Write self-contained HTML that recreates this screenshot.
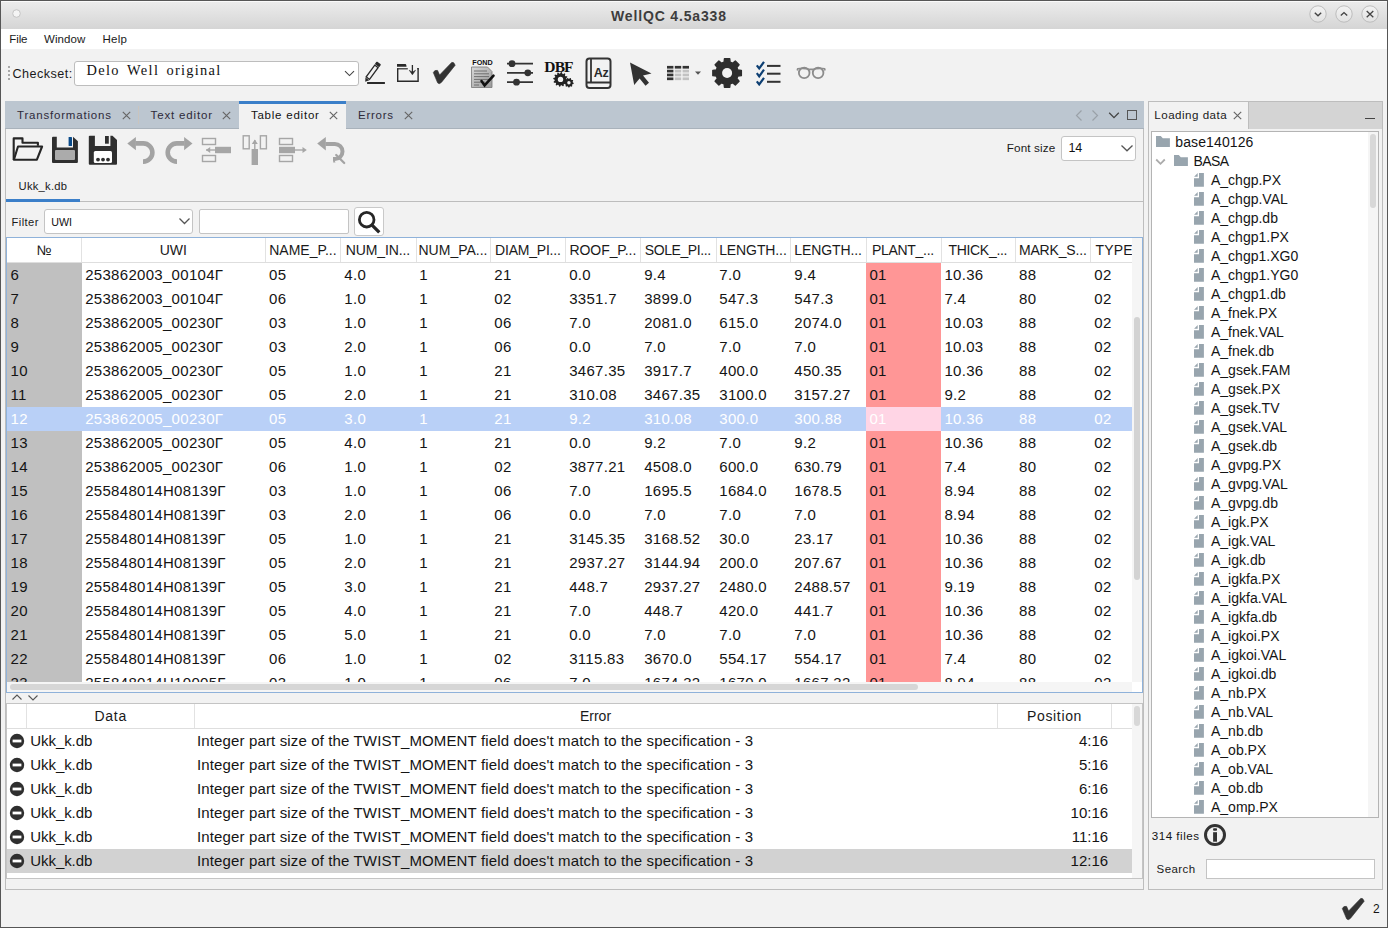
<!DOCTYPE html>
<html><head><meta charset="utf-8"><style>
html,body{margin:0;padding:0;width:1388px;height:928px;overflow:hidden;background:#f2f2f2}
.r{position:absolute;display:block}
.t{position:absolute;white-space:pre;line-height:1}
</style></head><body>
<div class="r" style="left:0px;top:0px;width:1388px;height:928px;background:#565656"></div>
<div class="r" style="left:1px;top:1px;width:1386px;height:926px;background:#f2f2f2"></div>
<div class="r" style="left:1px;top:1px;width:1386px;height:28px;background:linear-gradient(#ececec,#d5d5d5);border-radius:4px 4px 0 0"></div>
<div class="r" style="left:1px;top:1px;width:1386px;height:1px;background:#fafafa;border-radius:4px 4px 0 0"></div>
<div class="t" style="left:611.00px;top:8.65px;font-size:14px;color:#3d3d3d;font-weight:bold;font-family:'Liberation Sans', sans-serif;letter-spacing:0.844px;">WellQC 4.5a338</div>
<svg class="r" style="left:9.5px;top:7.3px;" width="13" height="13" viewBox="0 0 13 13"><circle cx="6.5" cy="6.5" r="3.8" fill="#f4f4f4" stroke="#c4c4c4" stroke-width="1"/></svg>
<svg class="r" style="left:1308.4px;top:4px;" width="20" height="20" viewBox="0 0 20 20"><defs><linearGradient id="gmin" x1="0" y1="0" x2="0" y2="1"><stop offset="0" stop-color="#f3f3f3"/><stop offset="1" stop-color="#e2e2e2"/></linearGradient></defs><circle cx="10" cy="10" r="8.2" fill="url(#gmin)" stroke="#bdbdbd" stroke-width="1"/><path d="M6.8 8.8 L10 11.8 L13.2 8.8" fill="none" stroke="#444" stroke-width="1.4"/></svg>
<svg class="r" style="left:1334.3px;top:4px;" width="20" height="20" viewBox="0 0 20 20"><defs><linearGradient id="gmax" x1="0" y1="0" x2="0" y2="1"><stop offset="0" stop-color="#f3f3f3"/><stop offset="1" stop-color="#e2e2e2"/></linearGradient></defs><circle cx="10" cy="10" r="8.2" fill="url(#gmax)" stroke="#bdbdbd" stroke-width="1"/><path d="M6.8 11.6 L10 8.6 L13.2 11.6" fill="none" stroke="#444" stroke-width="1.4"/></svg>
<svg class="r" style="left:1360.1px;top:4px;" width="20" height="20" viewBox="0 0 20 20"><defs><linearGradient id="gclose" x1="0" y1="0" x2="0" y2="1"><stop offset="0" stop-color="#f3f3f3"/><stop offset="1" stop-color="#e2e2e2"/></linearGradient></defs><circle cx="10" cy="10" r="8.2" fill="url(#gclose)" stroke="#bdbdbd" stroke-width="1"/><path d="M6.7 7 L13.3 13.3 M13.3 7 L6.7 13.3" fill="none" stroke="#444" stroke-width="1.3"/></svg>
<div class="r" style="left:1px;top:29px;width:1386px;height:20px;background:#ffffff"></div>
<div class="t" style="left:9.30px;top:34.07px;font-size:11.5px;color:#1a1a1a;font-weight:normal;font-family:'Liberation Sans', sans-serif;letter-spacing:-0.110px;">File</div>
<div class="t" style="left:44.00px;top:34.07px;font-size:11.5px;color:#1a1a1a;font-weight:normal;font-family:'Liberation Sans', sans-serif;letter-spacing:0.060px;">Window</div>
<div class="t" style="left:102.40px;top:34.07px;font-size:11.5px;color:#1a1a1a;font-weight:normal;font-family:'Liberation Sans', sans-serif;letter-spacing:0.316px;">Help</div>
<div class="r" style="left:8px;top:66px;width:2px;height:2px;background:#a8a8a8"></div>
<div class="r" style="left:8px;top:70px;width:2px;height:2px;background:#a8a8a8"></div>
<div class="r" style="left:8px;top:74px;width:2px;height:2px;background:#a8a8a8"></div>
<div class="r" style="left:8px;top:78px;width:2px;height:2px;background:#a8a8a8"></div>
<div class="t" style="left:12.50px;top:68.03px;font-size:12.6px;color:#1a1a1a;font-weight:normal;font-family:'Liberation Sans', sans-serif;letter-spacing:0.460px;">Checkset:</div>
<div class="r" style="left:74px;top:61px;width:285px;height:25px;background:#fff;border:1px solid #bdbdbd;border-radius:3px;box-sizing:border-box"></div>
<div class="t" style="left:86.50px;top:63.04px;font-size:14.4px;color:#111;font-weight:normal;font-family:'Liberation Serif', serif;letter-spacing:1.303px;">Delo</div>
<div class="t" style="left:127.00px;top:63.04px;font-size:14.4px;color:#111;font-weight:normal;font-family:'Liberation Serif', serif;letter-spacing:1.390px;">Well</div>
<div class="t" style="left:166.50px;top:63.04px;font-size:14.4px;color:#111;font-weight:normal;font-family:'Liberation Serif', serif;letter-spacing:1.273px;">original</div>
<svg class="r" style="left:344px;top:70px;" width="12" height="8" viewBox="0 0 12 8"><path d="M1 1.2 L5.5 5.6 L10 1.2" fill="none" stroke="#444" stroke-width="1.1"/></svg>
<svg class="r" style="left:360px;top:58px;" width="30" height="30" viewBox="0 0 30 30"><g transform="translate(5.2 23.8) rotate(-54)"><path d="M0 0 L3.7 -2.4 L3.7 2.4 Z" fill="#2a2a2a"/><rect x="4.5" y="-2.05" width="14.6" height="4.1" fill="none" stroke="#2a2a2a" stroke-width="1.35"/><rect x="19.9" y="-2.7" width="3.4" height="5.4" rx="0.8" fill="#2a2a2a"/></g><rect x="7.1" y="24" width="17.8" height="2" fill="#2a2a2a"/></svg>
<svg class="r" style="left:396px;top:63px;" width="24" height="21" viewBox="0 0 24 21"><path d="M1 1.1 H9.6 Q10.3 1.1 10.6 3.7 H1 Z" fill="#2a2a2a"/><path d="M1.7 5.4 V18.2 H22.1 V5.4" fill="none" stroke="#2a2a2a" stroke-width="1.4"/><path d="M1 5.8 H11.8" stroke="#2a2a2a" stroke-width="1.2"/><path d="M21.2 5.6 H22.8" stroke="#2a2a2a" stroke-width="1.2"/><path d="M16.4 2 V10" stroke="#2a2a2a" stroke-width="1.3"/><path d="M13.3 7.3 L16.4 11.8 L19.5 7.3 L16.4 9.2 Z" fill="#2a2a2a" stroke="#2a2a2a" stroke-width="0.6" stroke-linejoin="round"/></svg>
<svg class="r" style="left:432px;top:61px;" width="25" height="25" viewBox="0 0 25 25"><path d="M1.3 11.6 Q2.5 8.6 5.6 9.4 L7.6 14 L19.7 1.4 Q21.8 0.4 23.2 4.2 L9.6 21.2 Q7.3 23.8 5.6 21.8 Z" fill="#333" stroke="#333" stroke-width="0.6" stroke-linejoin="round"/></svg>
<svg class="r" style="left:470px;top:58px;" width="26" height="31" viewBox="0 0 26 31"><text x="12.5" y="7.4" text-anchor="middle" font-family="Liberation Sans" font-weight="bold" font-size="7.2" fill="#111">FOND</text><defs><linearGradient id="fd" x1="0" y1="0" x2="1" y2="1"><stop offset="0" stop-color="#d8d8d8"/><stop offset="1" stop-color="#9a9a9a"/></linearGradient></defs><path d="M1.5 9 L17.5 9 L22 13.5 L22 29.5 L1.5 29.5 Z" fill="url(#fd)" stroke="#777" stroke-width="0.8"/><path d="M4 13 H17 M4 15.8 H19 M4 18.6 H19 M4 21.4 H19 M4 24.2 H15 M4 27 H9" stroke="#666" stroke-width="0.9"/><path d="M11.5 23 L14.6 27.4 L23.5 17.6" fill="none" stroke="#111" stroke-width="2.6" stroke-linecap="round"/></svg>
<svg class="r" style="left:506px;top:58px;" width="28" height="30" viewBox="0 0 28 30"><path d="M1 5.7 H27 M1 14.8 H27 M1 24.2 H27" stroke="#333" stroke-width="1.8"/><circle cx="6" cy="5.7" r="3.4" fill="#333"/><circle cx="21.8" cy="14.8" r="3.4" fill="#333"/><circle cx="10.5" cy="24.2" r="3.4" fill="#333"/></svg>
<svg class="r" style="left:542px;top:58px;" width="34" height="31" viewBox="0 0 34 31"><text x="16.5" y="13.9" text-anchor="middle" font-family="Liberation Serif" font-weight="bold" font-size="15.5" fill="#111" letter-spacing="-0.9">DBF</text><polygon points="31.68,25.12 31.54,25.94 30.38,26.32 30.05,26.90 30.29,28.09 29.65,28.63 28.52,28.18 27.89,28.41 27.32,29.48 26.48,29.48 25.91,28.41 25.28,28.18 24.15,28.63 23.51,28.09 23.75,26.90 23.42,26.32 22.26,25.94 22.12,25.12 23.07,24.37 23.19,23.71 22.55,22.67 22.97,21.95 24.18,21.98 24.70,21.55 24.87,20.35 25.66,20.06 26.57,20.87 27.23,20.87 28.14,20.06 28.93,20.35 29.10,21.55 29.62,21.98 30.83,21.95 31.25,22.67 30.61,23.71 30.73,24.37" fill="#222"/><circle cx="26.9" cy="24.7" r="1.7" fill="#f2f2f2"/><polygon points="25.78,21.88 25.66,22.82 24.03,23.28 23.74,23.98 24.57,25.46 23.99,26.21 22.35,25.79 21.74,26.26 21.73,27.95 20.85,28.31 19.64,27.13 18.88,27.23 18.02,28.68 17.08,28.56 16.62,26.93 15.92,26.64 14.44,27.47 13.69,26.89 14.11,25.25 13.64,24.64 11.95,24.63 11.59,23.75 12.77,22.54 12.67,21.78 11.22,20.92 11.34,19.98 12.97,19.52 13.26,18.82 12.43,17.34 13.01,16.59 14.65,17.01 15.26,16.54 15.27,14.85 16.15,14.49 17.36,15.67 18.12,15.57 18.98,14.12 19.92,14.24 20.38,15.87 21.08,16.16 22.56,15.33 23.31,15.91 22.89,17.55 23.36,18.16 25.05,18.17 25.41,19.05 24.23,20.26 24.33,21.02" fill="#222"/><circle cx="18.5" cy="21.4" r="2.7" fill="#f2f2f2"/></svg>
<svg class="r" style="left:585px;top:57px;" width="27" height="32" viewBox="0 0 27 32"><rect x="1.5" y="1.5" width="24" height="29.5" rx="3" fill="none" stroke="#333" stroke-width="2"/><path d="M6 1.5 V25 M1.5 25.5 H25.5" stroke="#333" stroke-width="1.8"/><text x="16" y="19.6" text-anchor="middle" font-family="Liberation Sans" font-weight="bold" font-size="12.5" fill="#2a2a2a" letter-spacing="-0.3">Az</text></svg>
<svg class="r" style="left:628px;top:61px;" width="26" height="26" viewBox="0 0 26 26"><path d="M2 1.5 L23.5 12.5 L15 14.6 L21 21.8 L17.5 24.8 L11.6 17.4 L6.2 24 Z" fill="#333"/></svg>
<svg class="r" style="left:666px;top:65px;" width="25" height="18" viewBox="0 0 25 18"><rect x="1.0" y="0.90" width="6.4" height="2.7" fill="#333"/><rect x="8.8" y="0.90" width="6.4" height="2.7" fill="#333"/><rect x="16.6" y="0.90" width="6.4" height="2.7" fill="#333"/><rect x="1.0" y="4.75" width="6.4" height="2.7" fill="#333"/><rect x="8.8" y="4.75" width="6.4" height="2.7" fill="#c2c2c2"/><rect x="16.6" y="4.75" width="6.4" height="2.7" fill="#c2c2c2"/><rect x="1.0" y="8.60" width="6.4" height="2.7" fill="#333"/><rect x="8.8" y="8.60" width="6.4" height="2.7" fill="#c2c2c2"/><rect x="16.6" y="8.60" width="6.4" height="2.7" fill="#c2c2c2"/><rect x="1.0" y="12.45" width="6.4" height="2.7" fill="#333"/><rect x="8.8" y="12.45" width="6.4" height="2.7" fill="#c2c2c2"/><rect x="16.6" y="12.45" width="6.4" height="2.7" fill="#c2c2c2"/></svg>
<svg class="r" style="left:694px;top:70px;" width="8" height="6" viewBox="0 0 8 6"><path d="M1 1.5 H7 L4 4.8 Z" fill="#555"/></svg>
<svg class="r" style="left:710px;top:57px;" width="34" height="33" viewBox="0 0 34 33"><polygon points="27.89,13.01 31.36,13.35 31.36,18.65 27.89,18.99 26.84,21.52 29.05,24.21 25.31,27.95 22.62,25.74 20.09,26.79 19.75,30.26 14.45,30.26 14.11,26.79 11.58,25.74 8.89,27.95 5.15,24.21 7.36,21.52 6.31,18.99 2.84,18.65 2.84,13.35 6.31,13.01 7.36,10.48 5.15,7.79 8.89,4.05 11.58,6.26 14.11,5.21 14.45,1.74 19.75,1.74 20.09,5.21 22.62,6.26 25.31,4.05 29.05,7.79 26.84,10.48" fill="#2e2e2e" stroke="#2e2e2e" stroke-width="1.4" stroke-linejoin="round"/><circle cx="17.1" cy="16" r="5" fill="#f2f2f2"/></svg>
<svg class="r" style="left:755px;top:58px;" width="27" height="28" viewBox="0 0 27 28"><path d="M1.8 7.400000000000006 L4.2 10.500000000000005 L9 3.9000000000000057" fill="none" stroke="#0d3f73" stroke-width="2.2"/><rect x="12" y="6.900000000000006" width="13.5" height="2" fill="#333"/><path d="M1.8 15.200000000000003 L4.2 18.300000000000004 L9 11.700000000000003" fill="none" stroke="#0d3f73" stroke-width="2.2"/><rect x="12" y="14.700000000000003" width="13.5" height="2" fill="#333"/><path d="M1.8 23.299999999999997 L4.2 26.4 L9 19.799999999999997" fill="none" stroke="#0d3f73" stroke-width="2.2"/><rect x="12" y="22.799999999999997" width="13.5" height="2" fill="#333"/></svg>
<svg class="r" style="left:795px;top:64px;" width="32" height="18" viewBox="0 0 32 18"><circle cx="9.2" cy="8.9" r="5.3" fill="none" stroke="#8c8c8c" stroke-width="1.8"/><circle cx="23.1" cy="8.9" r="5.3" fill="none" stroke="#8c8c8c" stroke-width="1.8"/><path d="M2.3 6.5 L2.6 4.8 Q9 3.8 14.5 5.4 H17.8 Q23.3 3.8 29.7 4.8 L30 6.5" fill="none" stroke="#8c8c8c" stroke-width="1.6" stroke-linejoin="round"/></svg>
<div class="r" style="left:5px;top:101px;width:1139px;height:789px;background:#f2f2f2;border:1px solid #bdbdbd;box-sizing:border-box"></div>
<div class="r" style="left:5px;top:101px;width:1139px;height:28px;background:#bcc6d0;border-bottom:1px solid #a9b2bb;box-sizing:border-box"></div>
<div class="t" style="left:17.00px;top:109.97px;font-size:11.5px;color:#2e2a3a;font-weight:normal;font-family:'Liberation Sans', sans-serif;letter-spacing:0.810px;">Transformations</div>
<svg class="r" style="left:121.5px;top:111px;" width="9" height="9" viewBox="0 0 9 9"><path d="M0.8 0.8 L8.2 8.2 M8.2 0.8 L0.8 8.2" stroke="#666" stroke-width="1.15"/></svg>
<div class="r" style="left:138px;top:106px;width:1px;height:18px;background:#c9c4be"></div>
<div class="t" style="left:150.60px;top:109.97px;font-size:11.5px;color:#2e2a3a;font-weight:normal;font-family:'Liberation Sans', sans-serif;letter-spacing:0.845px;">Text editor</div>
<svg class="r" style="left:221.5px;top:111px;" width="9" height="9" viewBox="0 0 9 9"><path d="M0.8 0.8 L8.2 8.2 M8.2 0.8 L0.8 8.2" stroke="#666" stroke-width="1.15"/></svg>
<div class="r" style="left:239px;top:101px;width:107px;height:28px;background:#f2f2f2"></div>
<div class="r" style="left:239px;top:101px;width:107px;height:3px;background:#3b7fc9"></div>
<div class="t" style="left:250.90px;top:109.97px;font-size:11.5px;color:#111;font-weight:normal;font-family:'Liberation Sans', sans-serif;letter-spacing:0.777px;">Table editor</div>
<svg class="r" style="left:328.5px;top:111px;" width="9" height="9" viewBox="0 0 9 9"><path d="M0.8 0.8 L8.2 8.2 M8.2 0.8 L0.8 8.2" stroke="#666" stroke-width="1.15"/></svg>
<div class="t" style="left:358.00px;top:109.97px;font-size:11.5px;color:#2e2a3a;font-weight:normal;font-family:'Liberation Sans', sans-serif;letter-spacing:0.739px;">Errors</div>
<svg class="r" style="left:403.5px;top:111px;" width="9" height="9" viewBox="0 0 9 9"><path d="M0.8 0.8 L8.2 8.2 M8.2 0.8 L0.8 8.2" stroke="#666" stroke-width="1.15"/></svg>
<svg class="r" style="left:1074px;top:109px;" width="10" height="13" viewBox="0 0 10 13"><path d="M7.5 1.5 L2.5 6.5 L7.5 11.5" fill="none" stroke="#9aa1a8" stroke-width="1.2"/></svg>
<svg class="r" style="left:1090px;top:109px;" width="10" height="13" viewBox="0 0 10 13"><path d="M2.5 1.5 L7.5 6.5 L2.5 11.5" fill="none" stroke="#9aa1a8" stroke-width="1.2"/></svg>
<svg class="r" style="left:1108px;top:111px;" width="12" height="9" viewBox="0 0 12 9"><path d="M1.2 1.8 L6 6.6 L10.8 1.8" fill="none" stroke="#444" stroke-width="1.3"/></svg>
<div class="r" style="left:1127px;top:110px;width:10px;height:10px;border:1.5px solid #555;box-sizing:border-box"></div>
<svg class="r" style="left:11px;top:136px;" width="33" height="27" viewBox="0 0 33 27"><path d="M2.7 24 V2.4 H11.5 V6.7 H26.9 V9.8" fill="none" stroke="#252525" stroke-width="2.1" stroke-linejoin="round"/><path d="M7 10.5 H31.1 L25.9 23.7 H2.9 Z" fill="none" stroke="#252525" stroke-width="2.1" stroke-linejoin="round"/></svg>
<svg class="r" style="left:51px;top:136px;" width="28" height="28" viewBox="0 0 28 28"><path d="M1 1.8 Q1 0.8 2 0.8 L22 0.8 L26.9 5.2 L26.9 25.9 Q26.9 26.9 25.9 26.9 L2 26.9 Q1 26.9 1 25.9 Z" fill="#2f2f2f"/><rect x="5.8" y="0" width="16.2" height="11.5" fill="#f2f2f2"/><rect x="17.6" y="1" width="3.4" height="9" fill="#0a4b8a" rx="0.6"/><rect x="4" y="14" width="20" height="10" rx="1" fill="#ababab"/></svg>
<svg class="r" style="left:88px;top:135px;" width="30" height="31" viewBox="0 0 30 31"><path d="M0.8 1.7 Q0.8 0.7 1.8 0.7 L24.5 0.7 L29 5 L29 28.8 Q29 29.8 28 29.8 L1.8 29.8 Q0.8 29.8 0.8 28.8 Z" fill="#2f2f2f"/><rect x="6.9" y="0" width="15.5" height="11" fill="#f2f2f2"/><rect x="17" y="1" width="3.8" height="7.7" fill="#2f2f2f"/><rect x="5.8" y="15.9" width="18.2" height="12" rx="1.5" fill="#fff"/><circle cx="10" cy="24.6" r="1.9" fill="#2f2f2f"/><circle cx="15" cy="24.6" r="1.9" fill="#2f2f2f"/><circle cx="20" cy="24.6" r="1.9" fill="#2f2f2f"/></svg>
<svg class="r" style="left:126px;top:136px;" width="31" height="28" viewBox="0 0 31 28"><path d="M9.5 7.4 H17.3 A9.1 9.1 0 0 1 17.3 25.6 H17" fill="none" stroke="#a3a3a3" stroke-width="4.6"/><path d="M1.3 7.5 L9.9 1 L9.9 14.3 Z" fill="#a3a3a3"/></svg>
<svg class="r" style="left:163px;top:136px;" width="31" height="28" viewBox="0 0 31 28"><path d="M21.5 7.4 H13.8 A9.1 9.1 0 0 0 13.8 25.6 H14" fill="none" stroke="#a3a3a3" stroke-width="4.6"/><path d="M29.5 7.5 L21.1 1 L21.1 14.3 Z" fill="#a3a3a3"/></svg>
<svg class="r" style="left:201px;top:137px;" width="32" height="26" viewBox="0 0 32 26"><rect x="1.5" y="1.5" width="13" height="6" fill="none" stroke="#a6a6a6" stroke-width="1.4"/><rect x="1.5" y="18.5" width="13" height="6" fill="none" stroke="#a6a6a6" stroke-width="1.4"/><rect x="14" y="9.8" width="16" height="6.4" fill="#a6a6a6"/><path d="M5 13 H14" stroke="#a6a6a6" stroke-width="1.4"/><path d="M9.2 10 L5 13 L9.2 16 Z" fill="#a6a6a6"/></svg>
<svg class="r" style="left:242px;top:134px;" width="27" height="32" viewBox="0 0 27 32"><rect x="1.2" y="1.8" width="6" height="13" fill="none" stroke="#a6a6a6" stroke-width="1.4"/><rect x="18.4" y="1.8" width="6" height="13" fill="none" stroke="#a6a6a6" stroke-width="1.4"/><rect x="9.6" y="15" width="6.4" height="16" fill="#a6a6a6"/><path d="M12.8 6 V15" stroke="#a6a6a6" stroke-width="1.4"/><path d="M9.8 10 L12.8 5.4 L15.8 10 Z" fill="#a6a6a6"/></svg>
<svg class="r" style="left:278px;top:137px;" width="31" height="26" viewBox="0 0 31 26"><rect x="1.5" y="1.5" width="13" height="6" fill="none" stroke="#a6a6a6" stroke-width="1.4"/><rect x="1.5" y="18.5" width="13" height="6" fill="none" stroke="#a6a6a6" stroke-width="1.4"/><rect x="1" y="9.8" width="16" height="6.4" fill="#a6a6a6"/><path d="M17 13 H25" stroke="#a6a6a6" stroke-width="1.4"/><path d="M24.5 10 L28.8 13 L24.5 16 Z" fill="#a6a6a6"/></svg>
<svg class="r" style="left:316px;top:136px;" width="31" height="29" viewBox="0 0 31 29"><path d="M9.5 7.9 H18.9 A7.6 7.6 0 0 1 18.9 23.1 H17" fill="none" stroke="#a3a3a3" stroke-width="4"/><path d="M17.2 21.5 V26.6 L19.5 26.6 Z" fill="#a3a3a3"/><path d="M1.2 7.6 L9.8 1 L9.8 14.4 Z" fill="#a3a3a3"/><path d="M20.2 19 L28.2 27" stroke="#a3a3a3" stroke-width="2.2" stroke-linecap="round"/></svg>
<div class="t" style="left:1006.80px;top:142.40px;font-size:11.7px;color:#1a1a1a;font-weight:normal;font-family:'Liberation Sans', sans-serif;letter-spacing:0.129px;">Font size</div>
<div class="r" style="left:1061px;top:136px;width:75px;height:25px;background:#fff;border:1px solid #c4c4c4;border-radius:3px;box-sizing:border-box"></div>
<div class="t" style="left:1068.40px;top:141.92px;font-size:12.5px;color:#111;font-weight:normal;font-family:'Liberation Sans', sans-serif;letter-spacing:0.000px;">14</div>
<svg class="r" style="left:1120px;top:144px;" width="14" height="9" viewBox="0 0 14 9"><path d="M1.5 1.5 L7 6.8 L12.5 1.5" fill="none" stroke="#555" stroke-width="1.3"/></svg>
<div class="t" style="left:18.60px;top:181.32px;font-size:11.2px;color:#1a1a1a;font-weight:normal;font-family:'Liberation Sans', sans-serif;letter-spacing:0.245px;">Ukk_k.db</div>
<div class="r" style="left:6px;top:201px;width:1137px;height:1px;background:#bdbdbd"></div>
<div class="r" style="left:6px;top:199px;width:74px;height:3px;background:#3b7fc9"></div>
<div class="t" style="left:11.50px;top:216.82px;font-size:11.2px;color:#1a1a1a;font-weight:normal;font-family:'Liberation Sans', sans-serif;letter-spacing:0.422px;">Filter</div>
<div class="r" style="left:44px;top:209px;width:149px;height:25px;background:#fff;border:1px solid #c4c4c4;border-radius:3px;box-sizing:border-box"></div>
<div class="t" style="left:51.30px;top:216.94px;font-size:10.7px;color:#111;font-weight:normal;font-family:'Liberation Sans', sans-serif;letter-spacing:0.000px;">UWI</div>
<svg class="r" style="left:178px;top:217px;" width="13" height="9" viewBox="0 0 13 9"><path d="M1.5 1.5 L6.5 6.5 L11.5 1.5" fill="none" stroke="#555" stroke-width="1.3"/></svg>
<div class="r" style="left:199px;top:209px;width:150px;height:25px;background:#fff;border:1px solid #c4c4c4;border-radius:2px;box-sizing:border-box"></div>
<div class="r" style="left:354px;top:207px;width:30px;height:29px;background:#fff;border:1px solid #c9c9c9;border-radius:3px;box-sizing:border-box"></div>
<svg class="r" style="left:356px;top:209px;" width="26" height="25" viewBox="0 0 26 25"><circle cx="10.7" cy="10.7" r="7.3" fill="none" stroke="#262626" stroke-width="2.8"/><path d="M15.8 15.8 L23.3 23.3" stroke="#262626" stroke-width="3.3"/></svg>
<div class="r" style="left:6px;top:237px;width:1137px;height:456px;background:#fff;border:1px solid #8fb2da;box-sizing:border-box"></div>
<div class="r" style="left:7px;top:262px;width:1125px;height:1px;background:#dedede"></div>
<div class="r" style="left:81px;top:238px;width:1px;height:24px;background:#e2e2e2"></div>
<div class="r" style="left:265px;top:238px;width:1px;height:24px;background:#e2e2e2"></div>
<div class="r" style="left:340px;top:238px;width:1px;height:24px;background:#e2e2e2"></div>
<div class="r" style="left:416px;top:238px;width:1px;height:24px;background:#e2e2e2"></div>
<div class="r" style="left:490px;top:238px;width:1px;height:24px;background:#e2e2e2"></div>
<div class="r" style="left:565px;top:238px;width:1px;height:24px;background:#e2e2e2"></div>
<div class="r" style="left:640px;top:238px;width:1px;height:24px;background:#e2e2e2"></div>
<div class="r" style="left:716px;top:238px;width:1px;height:24px;background:#e2e2e2"></div>
<div class="r" style="left:790px;top:238px;width:1px;height:24px;background:#e2e2e2"></div>
<div class="r" style="left:866px;top:238px;width:1px;height:24px;background:#e2e2e2"></div>
<div class="r" style="left:941px;top:238px;width:1px;height:24px;background:#e2e2e2"></div>
<div class="r" style="left:1015px;top:238px;width:1px;height:24px;background:#e2e2e2"></div>
<div class="r" style="left:1090px;top:238px;width:1px;height:24px;background:#e2e2e2"></div>
<div class="r" style="left:7px;top:238px;width:1125px;height:444px;overflow:hidden">
<div class="t" style="left:29.69px;top:5.45px;font-size:14px;color:#1a1a1a;font-weight:normal;font-family:'Liberation Sans', sans-serif;letter-spacing:0.000px;">№</div>
<div class="t" style="left:152.74px;top:5.45px;font-size:14px;color:#1a1a1a;font-weight:normal;font-family:'Liberation Sans', sans-serif;letter-spacing:0.000px;">UWI</div>
<div class="t" style="left:262.25px;top:5.45px;font-size:14px;color:#1a1a1a;font-weight:normal;font-family:'Liberation Sans', sans-serif;letter-spacing:-0.017px;">NAME_P...</div>
<div class="t" style="left:338.85px;top:5.45px;font-size:14px;color:#1a1a1a;font-weight:normal;font-family:'Liberation Sans', sans-serif;letter-spacing:-0.130px;">NUM_IN...</div>
<div class="t" style="left:411.50px;top:5.45px;font-size:14px;color:#1a1a1a;font-weight:normal;font-family:'Liberation Sans', sans-serif;letter-spacing:0.003px;">NUM_PA...</div>
<div class="t" style="left:488.10px;top:5.45px;font-size:14px;color:#1a1a1a;font-weight:normal;font-family:'Liberation Sans', sans-serif;letter-spacing:-0.220px;">DIAM_PI...</div>
<div class="t" style="left:562.50px;top:5.45px;font-size:14px;color:#1a1a1a;font-weight:normal;font-family:'Liberation Sans', sans-serif;letter-spacing:-0.079px;">ROOF_P...</div>
<div class="t" style="left:637.85px;top:5.45px;font-size:14px;color:#1a1a1a;font-weight:normal;font-family:'Liberation Sans', sans-serif;letter-spacing:-0.426px;">SOLE_PI...</div>
<div class="t" style="left:712.20px;top:5.45px;font-size:14px;color:#1a1a1a;font-weight:normal;font-family:'Liberation Sans', sans-serif;letter-spacing:-0.107px;">LENGTH...</div>
<div class="t" style="left:787.25px;top:5.45px;font-size:14px;color:#1a1a1a;font-weight:normal;font-family:'Liberation Sans', sans-serif;letter-spacing:-0.107px;">LENGTH...</div>
<div class="t" style="left:865.10px;top:5.45px;font-size:14px;color:#1a1a1a;font-weight:normal;font-family:'Liberation Sans', sans-serif;letter-spacing:-0.323px;">PLANT_...</div>
<div class="t" style="left:941.45px;top:5.45px;font-size:14px;color:#1a1a1a;font-weight:normal;font-family:'Liberation Sans', sans-serif;letter-spacing:-0.307px;">THICK_...</div>
<div class="t" style="left:1011.90px;top:5.45px;font-size:14px;color:#1a1a1a;font-weight:normal;font-family:'Liberation Sans', sans-serif;letter-spacing:-0.155px;">MARK_S...</div>
<div class="t" style="left:1088.50px;top:5.45px;font-size:14px;color:#1a1a1a;font-weight:normal;font-family:'Liberation Sans', sans-serif;letter-spacing:0.144px;">TYPE</div>
<div class="r" style="left:0px;top:25px;width:75px;height:24px;background:#c0c0c0"></div>
<div class="r" style="left:859px;top:25px;width:75px;height:24px;background:#ff9696"></div>
<div class="t" style="left:3.50px;top:29.30px;font-size:15px;color:#141414;font-weight:normal;font-family:'Liberation Sans', sans-serif;letter-spacing:0.000px;letter-spacing:0.3px">6</div>
<div class="t" style="left:78.20px;top:29.30px;font-size:15px;color:#141414;font-weight:normal;font-family:'Liberation Sans', sans-serif;letter-spacing:0.000px;letter-spacing:0.3px">253862003_00104Г</div>
<div class="t" style="left:262.10px;top:29.30px;font-size:15px;color:#141414;font-weight:normal;font-family:'Liberation Sans', sans-serif;letter-spacing:0.000px;letter-spacing:0.3px">05</div>
<div class="t" style="left:337.30px;top:29.30px;font-size:15px;color:#141414;font-weight:normal;font-family:'Liberation Sans', sans-serif;letter-spacing:0.000px;letter-spacing:0.3px">4.0</div>
<div class="t" style="left:412.30px;top:29.30px;font-size:15px;color:#141414;font-weight:normal;font-family:'Liberation Sans', sans-serif;letter-spacing:0.000px;letter-spacing:0.3px">1</div>
<div class="t" style="left:487.30px;top:29.30px;font-size:15px;color:#141414;font-weight:normal;font-family:'Liberation Sans', sans-serif;letter-spacing:0.000px;letter-spacing:0.3px">21</div>
<div class="t" style="left:562.20px;top:29.30px;font-size:15px;color:#141414;font-weight:normal;font-family:'Liberation Sans', sans-serif;letter-spacing:0.000px;letter-spacing:0.3px">0.0</div>
<div class="t" style="left:637.20px;top:29.30px;font-size:15px;color:#141414;font-weight:normal;font-family:'Liberation Sans', sans-serif;letter-spacing:0.000px;letter-spacing:0.3px">9.4</div>
<div class="t" style="left:712.30px;top:29.30px;font-size:15px;color:#141414;font-weight:normal;font-family:'Liberation Sans', sans-serif;letter-spacing:0.000px;letter-spacing:0.3px">7.0</div>
<div class="t" style="left:787.30px;top:29.30px;font-size:15px;color:#141414;font-weight:normal;font-family:'Liberation Sans', sans-serif;letter-spacing:0.000px;letter-spacing:0.3px">9.4</div>
<div class="t" style="left:862.40px;top:29.30px;font-size:15px;color:#141414;font-weight:normal;font-family:'Liberation Sans', sans-serif;letter-spacing:0.000px;letter-spacing:0.3px">01</div>
<div class="t" style="left:937.40px;top:29.30px;font-size:15px;color:#141414;font-weight:normal;font-family:'Liberation Sans', sans-serif;letter-spacing:0.000px;letter-spacing:0.3px">10.36</div>
<div class="t" style="left:1012.10px;top:29.30px;font-size:15px;color:#141414;font-weight:normal;font-family:'Liberation Sans', sans-serif;letter-spacing:0.000px;letter-spacing:0.3px">88</div>
<div class="t" style="left:1087.30px;top:29.30px;font-size:15px;color:#141414;font-weight:normal;font-family:'Liberation Sans', sans-serif;letter-spacing:0.000px;letter-spacing:0.3px">02</div>
<div class="r" style="left:0px;top:49px;width:75px;height:24px;background:#c0c0c0"></div>
<div class="r" style="left:859px;top:49px;width:75px;height:24px;background:#ff9696"></div>
<div class="t" style="left:3.50px;top:53.30px;font-size:15px;color:#141414;font-weight:normal;font-family:'Liberation Sans', sans-serif;letter-spacing:0.000px;letter-spacing:0.3px">7</div>
<div class="t" style="left:78.20px;top:53.30px;font-size:15px;color:#141414;font-weight:normal;font-family:'Liberation Sans', sans-serif;letter-spacing:0.000px;letter-spacing:0.3px">253862003_00104Г</div>
<div class="t" style="left:262.10px;top:53.30px;font-size:15px;color:#141414;font-weight:normal;font-family:'Liberation Sans', sans-serif;letter-spacing:0.000px;letter-spacing:0.3px">06</div>
<div class="t" style="left:337.30px;top:53.30px;font-size:15px;color:#141414;font-weight:normal;font-family:'Liberation Sans', sans-serif;letter-spacing:0.000px;letter-spacing:0.3px">1.0</div>
<div class="t" style="left:412.30px;top:53.30px;font-size:15px;color:#141414;font-weight:normal;font-family:'Liberation Sans', sans-serif;letter-spacing:0.000px;letter-spacing:0.3px">1</div>
<div class="t" style="left:487.30px;top:53.30px;font-size:15px;color:#141414;font-weight:normal;font-family:'Liberation Sans', sans-serif;letter-spacing:0.000px;letter-spacing:0.3px">02</div>
<div class="t" style="left:562.20px;top:53.30px;font-size:15px;color:#141414;font-weight:normal;font-family:'Liberation Sans', sans-serif;letter-spacing:0.000px;letter-spacing:0.3px">3351.7</div>
<div class="t" style="left:637.20px;top:53.30px;font-size:15px;color:#141414;font-weight:normal;font-family:'Liberation Sans', sans-serif;letter-spacing:0.000px;letter-spacing:0.3px">3899.0</div>
<div class="t" style="left:712.30px;top:53.30px;font-size:15px;color:#141414;font-weight:normal;font-family:'Liberation Sans', sans-serif;letter-spacing:0.000px;letter-spacing:0.3px">547.3</div>
<div class="t" style="left:787.30px;top:53.30px;font-size:15px;color:#141414;font-weight:normal;font-family:'Liberation Sans', sans-serif;letter-spacing:0.000px;letter-spacing:0.3px">547.3</div>
<div class="t" style="left:862.40px;top:53.30px;font-size:15px;color:#141414;font-weight:normal;font-family:'Liberation Sans', sans-serif;letter-spacing:0.000px;letter-spacing:0.3px">01</div>
<div class="t" style="left:937.40px;top:53.30px;font-size:15px;color:#141414;font-weight:normal;font-family:'Liberation Sans', sans-serif;letter-spacing:0.000px;letter-spacing:0.3px">7.4</div>
<div class="t" style="left:1012.10px;top:53.30px;font-size:15px;color:#141414;font-weight:normal;font-family:'Liberation Sans', sans-serif;letter-spacing:0.000px;letter-spacing:0.3px">80</div>
<div class="t" style="left:1087.30px;top:53.30px;font-size:15px;color:#141414;font-weight:normal;font-family:'Liberation Sans', sans-serif;letter-spacing:0.000px;letter-spacing:0.3px">02</div>
<div class="r" style="left:0px;top:73px;width:75px;height:24px;background:#c0c0c0"></div>
<div class="r" style="left:859px;top:73px;width:75px;height:24px;background:#ff9696"></div>
<div class="t" style="left:3.50px;top:77.30px;font-size:15px;color:#141414;font-weight:normal;font-family:'Liberation Sans', sans-serif;letter-spacing:0.000px;letter-spacing:0.3px">8</div>
<div class="t" style="left:78.20px;top:77.30px;font-size:15px;color:#141414;font-weight:normal;font-family:'Liberation Sans', sans-serif;letter-spacing:0.000px;letter-spacing:0.3px">253862005_00230Г</div>
<div class="t" style="left:262.10px;top:77.30px;font-size:15px;color:#141414;font-weight:normal;font-family:'Liberation Sans', sans-serif;letter-spacing:0.000px;letter-spacing:0.3px">03</div>
<div class="t" style="left:337.30px;top:77.30px;font-size:15px;color:#141414;font-weight:normal;font-family:'Liberation Sans', sans-serif;letter-spacing:0.000px;letter-spacing:0.3px">1.0</div>
<div class="t" style="left:412.30px;top:77.30px;font-size:15px;color:#141414;font-weight:normal;font-family:'Liberation Sans', sans-serif;letter-spacing:0.000px;letter-spacing:0.3px">1</div>
<div class="t" style="left:487.30px;top:77.30px;font-size:15px;color:#141414;font-weight:normal;font-family:'Liberation Sans', sans-serif;letter-spacing:0.000px;letter-spacing:0.3px">06</div>
<div class="t" style="left:562.20px;top:77.30px;font-size:15px;color:#141414;font-weight:normal;font-family:'Liberation Sans', sans-serif;letter-spacing:0.000px;letter-spacing:0.3px">7.0</div>
<div class="t" style="left:637.20px;top:77.30px;font-size:15px;color:#141414;font-weight:normal;font-family:'Liberation Sans', sans-serif;letter-spacing:0.000px;letter-spacing:0.3px">2081.0</div>
<div class="t" style="left:712.30px;top:77.30px;font-size:15px;color:#141414;font-weight:normal;font-family:'Liberation Sans', sans-serif;letter-spacing:0.000px;letter-spacing:0.3px">615.0</div>
<div class="t" style="left:787.30px;top:77.30px;font-size:15px;color:#141414;font-weight:normal;font-family:'Liberation Sans', sans-serif;letter-spacing:0.000px;letter-spacing:0.3px">2074.0</div>
<div class="t" style="left:862.40px;top:77.30px;font-size:15px;color:#141414;font-weight:normal;font-family:'Liberation Sans', sans-serif;letter-spacing:0.000px;letter-spacing:0.3px">01</div>
<div class="t" style="left:937.40px;top:77.30px;font-size:15px;color:#141414;font-weight:normal;font-family:'Liberation Sans', sans-serif;letter-spacing:0.000px;letter-spacing:0.3px">10.03</div>
<div class="t" style="left:1012.10px;top:77.30px;font-size:15px;color:#141414;font-weight:normal;font-family:'Liberation Sans', sans-serif;letter-spacing:0.000px;letter-spacing:0.3px">88</div>
<div class="t" style="left:1087.30px;top:77.30px;font-size:15px;color:#141414;font-weight:normal;font-family:'Liberation Sans', sans-serif;letter-spacing:0.000px;letter-spacing:0.3px">02</div>
<div class="r" style="left:0px;top:97px;width:75px;height:24px;background:#c0c0c0"></div>
<div class="r" style="left:859px;top:97px;width:75px;height:24px;background:#ff9696"></div>
<div class="t" style="left:3.50px;top:101.30px;font-size:15px;color:#141414;font-weight:normal;font-family:'Liberation Sans', sans-serif;letter-spacing:0.000px;letter-spacing:0.3px">9</div>
<div class="t" style="left:78.20px;top:101.30px;font-size:15px;color:#141414;font-weight:normal;font-family:'Liberation Sans', sans-serif;letter-spacing:0.000px;letter-spacing:0.3px">253862005_00230Г</div>
<div class="t" style="left:262.10px;top:101.30px;font-size:15px;color:#141414;font-weight:normal;font-family:'Liberation Sans', sans-serif;letter-spacing:0.000px;letter-spacing:0.3px">03</div>
<div class="t" style="left:337.30px;top:101.30px;font-size:15px;color:#141414;font-weight:normal;font-family:'Liberation Sans', sans-serif;letter-spacing:0.000px;letter-spacing:0.3px">2.0</div>
<div class="t" style="left:412.30px;top:101.30px;font-size:15px;color:#141414;font-weight:normal;font-family:'Liberation Sans', sans-serif;letter-spacing:0.000px;letter-spacing:0.3px">1</div>
<div class="t" style="left:487.30px;top:101.30px;font-size:15px;color:#141414;font-weight:normal;font-family:'Liberation Sans', sans-serif;letter-spacing:0.000px;letter-spacing:0.3px">06</div>
<div class="t" style="left:562.20px;top:101.30px;font-size:15px;color:#141414;font-weight:normal;font-family:'Liberation Sans', sans-serif;letter-spacing:0.000px;letter-spacing:0.3px">0.0</div>
<div class="t" style="left:637.20px;top:101.30px;font-size:15px;color:#141414;font-weight:normal;font-family:'Liberation Sans', sans-serif;letter-spacing:0.000px;letter-spacing:0.3px">7.0</div>
<div class="t" style="left:712.30px;top:101.30px;font-size:15px;color:#141414;font-weight:normal;font-family:'Liberation Sans', sans-serif;letter-spacing:0.000px;letter-spacing:0.3px">7.0</div>
<div class="t" style="left:787.30px;top:101.30px;font-size:15px;color:#141414;font-weight:normal;font-family:'Liberation Sans', sans-serif;letter-spacing:0.000px;letter-spacing:0.3px">7.0</div>
<div class="t" style="left:862.40px;top:101.30px;font-size:15px;color:#141414;font-weight:normal;font-family:'Liberation Sans', sans-serif;letter-spacing:0.000px;letter-spacing:0.3px">01</div>
<div class="t" style="left:937.40px;top:101.30px;font-size:15px;color:#141414;font-weight:normal;font-family:'Liberation Sans', sans-serif;letter-spacing:0.000px;letter-spacing:0.3px">10.03</div>
<div class="t" style="left:1012.10px;top:101.30px;font-size:15px;color:#141414;font-weight:normal;font-family:'Liberation Sans', sans-serif;letter-spacing:0.000px;letter-spacing:0.3px">88</div>
<div class="t" style="left:1087.30px;top:101.30px;font-size:15px;color:#141414;font-weight:normal;font-family:'Liberation Sans', sans-serif;letter-spacing:0.000px;letter-spacing:0.3px">02</div>
<div class="r" style="left:0px;top:121px;width:75px;height:24px;background:#c0c0c0"></div>
<div class="r" style="left:859px;top:121px;width:75px;height:24px;background:#ff9696"></div>
<div class="t" style="left:3.50px;top:125.30px;font-size:15px;color:#141414;font-weight:normal;font-family:'Liberation Sans', sans-serif;letter-spacing:0.000px;letter-spacing:0.3px">10</div>
<div class="t" style="left:78.20px;top:125.30px;font-size:15px;color:#141414;font-weight:normal;font-family:'Liberation Sans', sans-serif;letter-spacing:0.000px;letter-spacing:0.3px">253862005_00230Г</div>
<div class="t" style="left:262.10px;top:125.30px;font-size:15px;color:#141414;font-weight:normal;font-family:'Liberation Sans', sans-serif;letter-spacing:0.000px;letter-spacing:0.3px">05</div>
<div class="t" style="left:337.30px;top:125.30px;font-size:15px;color:#141414;font-weight:normal;font-family:'Liberation Sans', sans-serif;letter-spacing:0.000px;letter-spacing:0.3px">1.0</div>
<div class="t" style="left:412.30px;top:125.30px;font-size:15px;color:#141414;font-weight:normal;font-family:'Liberation Sans', sans-serif;letter-spacing:0.000px;letter-spacing:0.3px">1</div>
<div class="t" style="left:487.30px;top:125.30px;font-size:15px;color:#141414;font-weight:normal;font-family:'Liberation Sans', sans-serif;letter-spacing:0.000px;letter-spacing:0.3px">21</div>
<div class="t" style="left:562.20px;top:125.30px;font-size:15px;color:#141414;font-weight:normal;font-family:'Liberation Sans', sans-serif;letter-spacing:0.000px;letter-spacing:0.3px">3467.35</div>
<div class="t" style="left:637.20px;top:125.30px;font-size:15px;color:#141414;font-weight:normal;font-family:'Liberation Sans', sans-serif;letter-spacing:0.000px;letter-spacing:0.3px">3917.7</div>
<div class="t" style="left:712.30px;top:125.30px;font-size:15px;color:#141414;font-weight:normal;font-family:'Liberation Sans', sans-serif;letter-spacing:0.000px;letter-spacing:0.3px">400.0</div>
<div class="t" style="left:787.30px;top:125.30px;font-size:15px;color:#141414;font-weight:normal;font-family:'Liberation Sans', sans-serif;letter-spacing:0.000px;letter-spacing:0.3px">450.35</div>
<div class="t" style="left:862.40px;top:125.30px;font-size:15px;color:#141414;font-weight:normal;font-family:'Liberation Sans', sans-serif;letter-spacing:0.000px;letter-spacing:0.3px">01</div>
<div class="t" style="left:937.40px;top:125.30px;font-size:15px;color:#141414;font-weight:normal;font-family:'Liberation Sans', sans-serif;letter-spacing:0.000px;letter-spacing:0.3px">10.36</div>
<div class="t" style="left:1012.10px;top:125.30px;font-size:15px;color:#141414;font-weight:normal;font-family:'Liberation Sans', sans-serif;letter-spacing:0.000px;letter-spacing:0.3px">88</div>
<div class="t" style="left:1087.30px;top:125.30px;font-size:15px;color:#141414;font-weight:normal;font-family:'Liberation Sans', sans-serif;letter-spacing:0.000px;letter-spacing:0.3px">02</div>
<div class="r" style="left:0px;top:145px;width:75px;height:24px;background:#c0c0c0"></div>
<div class="r" style="left:859px;top:145px;width:75px;height:24px;background:#ff9696"></div>
<div class="t" style="left:3.50px;top:149.30px;font-size:15px;color:#141414;font-weight:normal;font-family:'Liberation Sans', sans-serif;letter-spacing:0.000px;letter-spacing:0.3px">11</div>
<div class="t" style="left:78.20px;top:149.30px;font-size:15px;color:#141414;font-weight:normal;font-family:'Liberation Sans', sans-serif;letter-spacing:0.000px;letter-spacing:0.3px">253862005_00230Г</div>
<div class="t" style="left:262.10px;top:149.30px;font-size:15px;color:#141414;font-weight:normal;font-family:'Liberation Sans', sans-serif;letter-spacing:0.000px;letter-spacing:0.3px">05</div>
<div class="t" style="left:337.30px;top:149.30px;font-size:15px;color:#141414;font-weight:normal;font-family:'Liberation Sans', sans-serif;letter-spacing:0.000px;letter-spacing:0.3px">2.0</div>
<div class="t" style="left:412.30px;top:149.30px;font-size:15px;color:#141414;font-weight:normal;font-family:'Liberation Sans', sans-serif;letter-spacing:0.000px;letter-spacing:0.3px">1</div>
<div class="t" style="left:487.30px;top:149.30px;font-size:15px;color:#141414;font-weight:normal;font-family:'Liberation Sans', sans-serif;letter-spacing:0.000px;letter-spacing:0.3px">21</div>
<div class="t" style="left:562.20px;top:149.30px;font-size:15px;color:#141414;font-weight:normal;font-family:'Liberation Sans', sans-serif;letter-spacing:0.000px;letter-spacing:0.3px">310.08</div>
<div class="t" style="left:637.20px;top:149.30px;font-size:15px;color:#141414;font-weight:normal;font-family:'Liberation Sans', sans-serif;letter-spacing:0.000px;letter-spacing:0.3px">3467.35</div>
<div class="t" style="left:712.30px;top:149.30px;font-size:15px;color:#141414;font-weight:normal;font-family:'Liberation Sans', sans-serif;letter-spacing:0.000px;letter-spacing:0.3px">3100.0</div>
<div class="t" style="left:787.30px;top:149.30px;font-size:15px;color:#141414;font-weight:normal;font-family:'Liberation Sans', sans-serif;letter-spacing:0.000px;letter-spacing:0.3px">3157.27</div>
<div class="t" style="left:862.40px;top:149.30px;font-size:15px;color:#141414;font-weight:normal;font-family:'Liberation Sans', sans-serif;letter-spacing:0.000px;letter-spacing:0.3px">01</div>
<div class="t" style="left:937.40px;top:149.30px;font-size:15px;color:#141414;font-weight:normal;font-family:'Liberation Sans', sans-serif;letter-spacing:0.000px;letter-spacing:0.3px">9.2</div>
<div class="t" style="left:1012.10px;top:149.30px;font-size:15px;color:#141414;font-weight:normal;font-family:'Liberation Sans', sans-serif;letter-spacing:0.000px;letter-spacing:0.3px">88</div>
<div class="t" style="left:1087.30px;top:149.30px;font-size:15px;color:#141414;font-weight:normal;font-family:'Liberation Sans', sans-serif;letter-spacing:0.000px;letter-spacing:0.3px">02</div>
<div class="r" style="left:0px;top:169px;width:1125px;height:24px;background:#b9d0f7"></div>
<div class="r" style="left:859px;top:169px;width:75px;height:24px;background:#ffd5e5"></div>
<div class="t" style="left:3.50px;top:173.30px;font-size:15px;color:#ffffff;font-weight:normal;font-family:'Liberation Sans', sans-serif;letter-spacing:0.000px;letter-spacing:0.3px">12</div>
<div class="t" style="left:78.20px;top:173.30px;font-size:15px;color:#ffffff;font-weight:normal;font-family:'Liberation Sans', sans-serif;letter-spacing:0.000px;letter-spacing:0.3px">253862005_00230Г</div>
<div class="t" style="left:262.10px;top:173.30px;font-size:15px;color:#ffffff;font-weight:normal;font-family:'Liberation Sans', sans-serif;letter-spacing:0.000px;letter-spacing:0.3px">05</div>
<div class="t" style="left:337.30px;top:173.30px;font-size:15px;color:#ffffff;font-weight:normal;font-family:'Liberation Sans', sans-serif;letter-spacing:0.000px;letter-spacing:0.3px">3.0</div>
<div class="t" style="left:412.30px;top:173.30px;font-size:15px;color:#ffffff;font-weight:normal;font-family:'Liberation Sans', sans-serif;letter-spacing:0.000px;letter-spacing:0.3px">1</div>
<div class="t" style="left:487.30px;top:173.30px;font-size:15px;color:#ffffff;font-weight:normal;font-family:'Liberation Sans', sans-serif;letter-spacing:0.000px;letter-spacing:0.3px">21</div>
<div class="t" style="left:562.20px;top:173.30px;font-size:15px;color:#ffffff;font-weight:normal;font-family:'Liberation Sans', sans-serif;letter-spacing:0.000px;letter-spacing:0.3px">9.2</div>
<div class="t" style="left:637.20px;top:173.30px;font-size:15px;color:#ffffff;font-weight:normal;font-family:'Liberation Sans', sans-serif;letter-spacing:0.000px;letter-spacing:0.3px">310.08</div>
<div class="t" style="left:712.30px;top:173.30px;font-size:15px;color:#ffffff;font-weight:normal;font-family:'Liberation Sans', sans-serif;letter-spacing:0.000px;letter-spacing:0.3px">300.0</div>
<div class="t" style="left:787.30px;top:173.30px;font-size:15px;color:#ffffff;font-weight:normal;font-family:'Liberation Sans', sans-serif;letter-spacing:0.000px;letter-spacing:0.3px">300.88</div>
<div class="t" style="left:862.40px;top:173.30px;font-size:15px;color:#ffffff;font-weight:normal;font-family:'Liberation Sans', sans-serif;letter-spacing:0.000px;letter-spacing:0.3px">01</div>
<div class="t" style="left:937.40px;top:173.30px;font-size:15px;color:#ffffff;font-weight:normal;font-family:'Liberation Sans', sans-serif;letter-spacing:0.000px;letter-spacing:0.3px">10.36</div>
<div class="t" style="left:1012.10px;top:173.30px;font-size:15px;color:#ffffff;font-weight:normal;font-family:'Liberation Sans', sans-serif;letter-spacing:0.000px;letter-spacing:0.3px">88</div>
<div class="t" style="left:1087.30px;top:173.30px;font-size:15px;color:#ffffff;font-weight:normal;font-family:'Liberation Sans', sans-serif;letter-spacing:0.000px;letter-spacing:0.3px">02</div>
<div class="r" style="left:0px;top:193px;width:75px;height:24px;background:#c0c0c0"></div>
<div class="r" style="left:859px;top:193px;width:75px;height:24px;background:#ff9696"></div>
<div class="t" style="left:3.50px;top:197.30px;font-size:15px;color:#141414;font-weight:normal;font-family:'Liberation Sans', sans-serif;letter-spacing:0.000px;letter-spacing:0.3px">13</div>
<div class="t" style="left:78.20px;top:197.30px;font-size:15px;color:#141414;font-weight:normal;font-family:'Liberation Sans', sans-serif;letter-spacing:0.000px;letter-spacing:0.3px">253862005_00230Г</div>
<div class="t" style="left:262.10px;top:197.30px;font-size:15px;color:#141414;font-weight:normal;font-family:'Liberation Sans', sans-serif;letter-spacing:0.000px;letter-spacing:0.3px">05</div>
<div class="t" style="left:337.30px;top:197.30px;font-size:15px;color:#141414;font-weight:normal;font-family:'Liberation Sans', sans-serif;letter-spacing:0.000px;letter-spacing:0.3px">4.0</div>
<div class="t" style="left:412.30px;top:197.30px;font-size:15px;color:#141414;font-weight:normal;font-family:'Liberation Sans', sans-serif;letter-spacing:0.000px;letter-spacing:0.3px">1</div>
<div class="t" style="left:487.30px;top:197.30px;font-size:15px;color:#141414;font-weight:normal;font-family:'Liberation Sans', sans-serif;letter-spacing:0.000px;letter-spacing:0.3px">21</div>
<div class="t" style="left:562.20px;top:197.30px;font-size:15px;color:#141414;font-weight:normal;font-family:'Liberation Sans', sans-serif;letter-spacing:0.000px;letter-spacing:0.3px">0.0</div>
<div class="t" style="left:637.20px;top:197.30px;font-size:15px;color:#141414;font-weight:normal;font-family:'Liberation Sans', sans-serif;letter-spacing:0.000px;letter-spacing:0.3px">9.2</div>
<div class="t" style="left:712.30px;top:197.30px;font-size:15px;color:#141414;font-weight:normal;font-family:'Liberation Sans', sans-serif;letter-spacing:0.000px;letter-spacing:0.3px">7.0</div>
<div class="t" style="left:787.30px;top:197.30px;font-size:15px;color:#141414;font-weight:normal;font-family:'Liberation Sans', sans-serif;letter-spacing:0.000px;letter-spacing:0.3px">9.2</div>
<div class="t" style="left:862.40px;top:197.30px;font-size:15px;color:#141414;font-weight:normal;font-family:'Liberation Sans', sans-serif;letter-spacing:0.000px;letter-spacing:0.3px">01</div>
<div class="t" style="left:937.40px;top:197.30px;font-size:15px;color:#141414;font-weight:normal;font-family:'Liberation Sans', sans-serif;letter-spacing:0.000px;letter-spacing:0.3px">10.36</div>
<div class="t" style="left:1012.10px;top:197.30px;font-size:15px;color:#141414;font-weight:normal;font-family:'Liberation Sans', sans-serif;letter-spacing:0.000px;letter-spacing:0.3px">88</div>
<div class="t" style="left:1087.30px;top:197.30px;font-size:15px;color:#141414;font-weight:normal;font-family:'Liberation Sans', sans-serif;letter-spacing:0.000px;letter-spacing:0.3px">02</div>
<div class="r" style="left:0px;top:217px;width:75px;height:24px;background:#c0c0c0"></div>
<div class="r" style="left:859px;top:217px;width:75px;height:24px;background:#ff9696"></div>
<div class="t" style="left:3.50px;top:221.30px;font-size:15px;color:#141414;font-weight:normal;font-family:'Liberation Sans', sans-serif;letter-spacing:0.000px;letter-spacing:0.3px">14</div>
<div class="t" style="left:78.20px;top:221.30px;font-size:15px;color:#141414;font-weight:normal;font-family:'Liberation Sans', sans-serif;letter-spacing:0.000px;letter-spacing:0.3px">253862005_00230Г</div>
<div class="t" style="left:262.10px;top:221.30px;font-size:15px;color:#141414;font-weight:normal;font-family:'Liberation Sans', sans-serif;letter-spacing:0.000px;letter-spacing:0.3px">06</div>
<div class="t" style="left:337.30px;top:221.30px;font-size:15px;color:#141414;font-weight:normal;font-family:'Liberation Sans', sans-serif;letter-spacing:0.000px;letter-spacing:0.3px">1.0</div>
<div class="t" style="left:412.30px;top:221.30px;font-size:15px;color:#141414;font-weight:normal;font-family:'Liberation Sans', sans-serif;letter-spacing:0.000px;letter-spacing:0.3px">1</div>
<div class="t" style="left:487.30px;top:221.30px;font-size:15px;color:#141414;font-weight:normal;font-family:'Liberation Sans', sans-serif;letter-spacing:0.000px;letter-spacing:0.3px">02</div>
<div class="t" style="left:562.20px;top:221.30px;font-size:15px;color:#141414;font-weight:normal;font-family:'Liberation Sans', sans-serif;letter-spacing:0.000px;letter-spacing:0.3px">3877.21</div>
<div class="t" style="left:637.20px;top:221.30px;font-size:15px;color:#141414;font-weight:normal;font-family:'Liberation Sans', sans-serif;letter-spacing:0.000px;letter-spacing:0.3px">4508.0</div>
<div class="t" style="left:712.30px;top:221.30px;font-size:15px;color:#141414;font-weight:normal;font-family:'Liberation Sans', sans-serif;letter-spacing:0.000px;letter-spacing:0.3px">600.0</div>
<div class="t" style="left:787.30px;top:221.30px;font-size:15px;color:#141414;font-weight:normal;font-family:'Liberation Sans', sans-serif;letter-spacing:0.000px;letter-spacing:0.3px">630.79</div>
<div class="t" style="left:862.40px;top:221.30px;font-size:15px;color:#141414;font-weight:normal;font-family:'Liberation Sans', sans-serif;letter-spacing:0.000px;letter-spacing:0.3px">01</div>
<div class="t" style="left:937.40px;top:221.30px;font-size:15px;color:#141414;font-weight:normal;font-family:'Liberation Sans', sans-serif;letter-spacing:0.000px;letter-spacing:0.3px">7.4</div>
<div class="t" style="left:1012.10px;top:221.30px;font-size:15px;color:#141414;font-weight:normal;font-family:'Liberation Sans', sans-serif;letter-spacing:0.000px;letter-spacing:0.3px">80</div>
<div class="t" style="left:1087.30px;top:221.30px;font-size:15px;color:#141414;font-weight:normal;font-family:'Liberation Sans', sans-serif;letter-spacing:0.000px;letter-spacing:0.3px">02</div>
<div class="r" style="left:0px;top:241px;width:75px;height:24px;background:#c0c0c0"></div>
<div class="r" style="left:859px;top:241px;width:75px;height:24px;background:#ff9696"></div>
<div class="t" style="left:3.50px;top:245.30px;font-size:15px;color:#141414;font-weight:normal;font-family:'Liberation Sans', sans-serif;letter-spacing:0.000px;letter-spacing:0.3px">15</div>
<div class="t" style="left:78.20px;top:245.30px;font-size:15px;color:#141414;font-weight:normal;font-family:'Liberation Sans', sans-serif;letter-spacing:0.000px;letter-spacing:0.3px">255848014H08139Г</div>
<div class="t" style="left:262.10px;top:245.30px;font-size:15px;color:#141414;font-weight:normal;font-family:'Liberation Sans', sans-serif;letter-spacing:0.000px;letter-spacing:0.3px">03</div>
<div class="t" style="left:337.30px;top:245.30px;font-size:15px;color:#141414;font-weight:normal;font-family:'Liberation Sans', sans-serif;letter-spacing:0.000px;letter-spacing:0.3px">1.0</div>
<div class="t" style="left:412.30px;top:245.30px;font-size:15px;color:#141414;font-weight:normal;font-family:'Liberation Sans', sans-serif;letter-spacing:0.000px;letter-spacing:0.3px">1</div>
<div class="t" style="left:487.30px;top:245.30px;font-size:15px;color:#141414;font-weight:normal;font-family:'Liberation Sans', sans-serif;letter-spacing:0.000px;letter-spacing:0.3px">06</div>
<div class="t" style="left:562.20px;top:245.30px;font-size:15px;color:#141414;font-weight:normal;font-family:'Liberation Sans', sans-serif;letter-spacing:0.000px;letter-spacing:0.3px">7.0</div>
<div class="t" style="left:637.20px;top:245.30px;font-size:15px;color:#141414;font-weight:normal;font-family:'Liberation Sans', sans-serif;letter-spacing:0.000px;letter-spacing:0.3px">1695.5</div>
<div class="t" style="left:712.30px;top:245.30px;font-size:15px;color:#141414;font-weight:normal;font-family:'Liberation Sans', sans-serif;letter-spacing:0.000px;letter-spacing:0.3px">1684.0</div>
<div class="t" style="left:787.30px;top:245.30px;font-size:15px;color:#141414;font-weight:normal;font-family:'Liberation Sans', sans-serif;letter-spacing:0.000px;letter-spacing:0.3px">1678.5</div>
<div class="t" style="left:862.40px;top:245.30px;font-size:15px;color:#141414;font-weight:normal;font-family:'Liberation Sans', sans-serif;letter-spacing:0.000px;letter-spacing:0.3px">01</div>
<div class="t" style="left:937.40px;top:245.30px;font-size:15px;color:#141414;font-weight:normal;font-family:'Liberation Sans', sans-serif;letter-spacing:0.000px;letter-spacing:0.3px">8.94</div>
<div class="t" style="left:1012.10px;top:245.30px;font-size:15px;color:#141414;font-weight:normal;font-family:'Liberation Sans', sans-serif;letter-spacing:0.000px;letter-spacing:0.3px">88</div>
<div class="t" style="left:1087.30px;top:245.30px;font-size:15px;color:#141414;font-weight:normal;font-family:'Liberation Sans', sans-serif;letter-spacing:0.000px;letter-spacing:0.3px">02</div>
<div class="r" style="left:0px;top:265px;width:75px;height:24px;background:#c0c0c0"></div>
<div class="r" style="left:859px;top:265px;width:75px;height:24px;background:#ff9696"></div>
<div class="t" style="left:3.50px;top:269.30px;font-size:15px;color:#141414;font-weight:normal;font-family:'Liberation Sans', sans-serif;letter-spacing:0.000px;letter-spacing:0.3px">16</div>
<div class="t" style="left:78.20px;top:269.30px;font-size:15px;color:#141414;font-weight:normal;font-family:'Liberation Sans', sans-serif;letter-spacing:0.000px;letter-spacing:0.3px">255848014H08139Г</div>
<div class="t" style="left:262.10px;top:269.30px;font-size:15px;color:#141414;font-weight:normal;font-family:'Liberation Sans', sans-serif;letter-spacing:0.000px;letter-spacing:0.3px">03</div>
<div class="t" style="left:337.30px;top:269.30px;font-size:15px;color:#141414;font-weight:normal;font-family:'Liberation Sans', sans-serif;letter-spacing:0.000px;letter-spacing:0.3px">2.0</div>
<div class="t" style="left:412.30px;top:269.30px;font-size:15px;color:#141414;font-weight:normal;font-family:'Liberation Sans', sans-serif;letter-spacing:0.000px;letter-spacing:0.3px">1</div>
<div class="t" style="left:487.30px;top:269.30px;font-size:15px;color:#141414;font-weight:normal;font-family:'Liberation Sans', sans-serif;letter-spacing:0.000px;letter-spacing:0.3px">06</div>
<div class="t" style="left:562.20px;top:269.30px;font-size:15px;color:#141414;font-weight:normal;font-family:'Liberation Sans', sans-serif;letter-spacing:0.000px;letter-spacing:0.3px">0.0</div>
<div class="t" style="left:637.20px;top:269.30px;font-size:15px;color:#141414;font-weight:normal;font-family:'Liberation Sans', sans-serif;letter-spacing:0.000px;letter-spacing:0.3px">7.0</div>
<div class="t" style="left:712.30px;top:269.30px;font-size:15px;color:#141414;font-weight:normal;font-family:'Liberation Sans', sans-serif;letter-spacing:0.000px;letter-spacing:0.3px">7.0</div>
<div class="t" style="left:787.30px;top:269.30px;font-size:15px;color:#141414;font-weight:normal;font-family:'Liberation Sans', sans-serif;letter-spacing:0.000px;letter-spacing:0.3px">7.0</div>
<div class="t" style="left:862.40px;top:269.30px;font-size:15px;color:#141414;font-weight:normal;font-family:'Liberation Sans', sans-serif;letter-spacing:0.000px;letter-spacing:0.3px">01</div>
<div class="t" style="left:937.40px;top:269.30px;font-size:15px;color:#141414;font-weight:normal;font-family:'Liberation Sans', sans-serif;letter-spacing:0.000px;letter-spacing:0.3px">8.94</div>
<div class="t" style="left:1012.10px;top:269.30px;font-size:15px;color:#141414;font-weight:normal;font-family:'Liberation Sans', sans-serif;letter-spacing:0.000px;letter-spacing:0.3px">88</div>
<div class="t" style="left:1087.30px;top:269.30px;font-size:15px;color:#141414;font-weight:normal;font-family:'Liberation Sans', sans-serif;letter-spacing:0.000px;letter-spacing:0.3px">02</div>
<div class="r" style="left:0px;top:289px;width:75px;height:24px;background:#c0c0c0"></div>
<div class="r" style="left:859px;top:289px;width:75px;height:24px;background:#ff9696"></div>
<div class="t" style="left:3.50px;top:293.30px;font-size:15px;color:#141414;font-weight:normal;font-family:'Liberation Sans', sans-serif;letter-spacing:0.000px;letter-spacing:0.3px">17</div>
<div class="t" style="left:78.20px;top:293.30px;font-size:15px;color:#141414;font-weight:normal;font-family:'Liberation Sans', sans-serif;letter-spacing:0.000px;letter-spacing:0.3px">255848014H08139Г</div>
<div class="t" style="left:262.10px;top:293.30px;font-size:15px;color:#141414;font-weight:normal;font-family:'Liberation Sans', sans-serif;letter-spacing:0.000px;letter-spacing:0.3px">05</div>
<div class="t" style="left:337.30px;top:293.30px;font-size:15px;color:#141414;font-weight:normal;font-family:'Liberation Sans', sans-serif;letter-spacing:0.000px;letter-spacing:0.3px">1.0</div>
<div class="t" style="left:412.30px;top:293.30px;font-size:15px;color:#141414;font-weight:normal;font-family:'Liberation Sans', sans-serif;letter-spacing:0.000px;letter-spacing:0.3px">1</div>
<div class="t" style="left:487.30px;top:293.30px;font-size:15px;color:#141414;font-weight:normal;font-family:'Liberation Sans', sans-serif;letter-spacing:0.000px;letter-spacing:0.3px">21</div>
<div class="t" style="left:562.20px;top:293.30px;font-size:15px;color:#141414;font-weight:normal;font-family:'Liberation Sans', sans-serif;letter-spacing:0.000px;letter-spacing:0.3px">3145.35</div>
<div class="t" style="left:637.20px;top:293.30px;font-size:15px;color:#141414;font-weight:normal;font-family:'Liberation Sans', sans-serif;letter-spacing:0.000px;letter-spacing:0.3px">3168.52</div>
<div class="t" style="left:712.30px;top:293.30px;font-size:15px;color:#141414;font-weight:normal;font-family:'Liberation Sans', sans-serif;letter-spacing:0.000px;letter-spacing:0.3px">30.0</div>
<div class="t" style="left:787.30px;top:293.30px;font-size:15px;color:#141414;font-weight:normal;font-family:'Liberation Sans', sans-serif;letter-spacing:0.000px;letter-spacing:0.3px">23.17</div>
<div class="t" style="left:862.40px;top:293.30px;font-size:15px;color:#141414;font-weight:normal;font-family:'Liberation Sans', sans-serif;letter-spacing:0.000px;letter-spacing:0.3px">01</div>
<div class="t" style="left:937.40px;top:293.30px;font-size:15px;color:#141414;font-weight:normal;font-family:'Liberation Sans', sans-serif;letter-spacing:0.000px;letter-spacing:0.3px">10.36</div>
<div class="t" style="left:1012.10px;top:293.30px;font-size:15px;color:#141414;font-weight:normal;font-family:'Liberation Sans', sans-serif;letter-spacing:0.000px;letter-spacing:0.3px">88</div>
<div class="t" style="left:1087.30px;top:293.30px;font-size:15px;color:#141414;font-weight:normal;font-family:'Liberation Sans', sans-serif;letter-spacing:0.000px;letter-spacing:0.3px">02</div>
<div class="r" style="left:0px;top:313px;width:75px;height:24px;background:#c0c0c0"></div>
<div class="r" style="left:859px;top:313px;width:75px;height:24px;background:#ff9696"></div>
<div class="t" style="left:3.50px;top:317.30px;font-size:15px;color:#141414;font-weight:normal;font-family:'Liberation Sans', sans-serif;letter-spacing:0.000px;letter-spacing:0.3px">18</div>
<div class="t" style="left:78.20px;top:317.30px;font-size:15px;color:#141414;font-weight:normal;font-family:'Liberation Sans', sans-serif;letter-spacing:0.000px;letter-spacing:0.3px">255848014H08139Г</div>
<div class="t" style="left:262.10px;top:317.30px;font-size:15px;color:#141414;font-weight:normal;font-family:'Liberation Sans', sans-serif;letter-spacing:0.000px;letter-spacing:0.3px">05</div>
<div class="t" style="left:337.30px;top:317.30px;font-size:15px;color:#141414;font-weight:normal;font-family:'Liberation Sans', sans-serif;letter-spacing:0.000px;letter-spacing:0.3px">2.0</div>
<div class="t" style="left:412.30px;top:317.30px;font-size:15px;color:#141414;font-weight:normal;font-family:'Liberation Sans', sans-serif;letter-spacing:0.000px;letter-spacing:0.3px">1</div>
<div class="t" style="left:487.30px;top:317.30px;font-size:15px;color:#141414;font-weight:normal;font-family:'Liberation Sans', sans-serif;letter-spacing:0.000px;letter-spacing:0.3px">21</div>
<div class="t" style="left:562.20px;top:317.30px;font-size:15px;color:#141414;font-weight:normal;font-family:'Liberation Sans', sans-serif;letter-spacing:0.000px;letter-spacing:0.3px">2937.27</div>
<div class="t" style="left:637.20px;top:317.30px;font-size:15px;color:#141414;font-weight:normal;font-family:'Liberation Sans', sans-serif;letter-spacing:0.000px;letter-spacing:0.3px">3144.94</div>
<div class="t" style="left:712.30px;top:317.30px;font-size:15px;color:#141414;font-weight:normal;font-family:'Liberation Sans', sans-serif;letter-spacing:0.000px;letter-spacing:0.3px">200.0</div>
<div class="t" style="left:787.30px;top:317.30px;font-size:15px;color:#141414;font-weight:normal;font-family:'Liberation Sans', sans-serif;letter-spacing:0.000px;letter-spacing:0.3px">207.67</div>
<div class="t" style="left:862.40px;top:317.30px;font-size:15px;color:#141414;font-weight:normal;font-family:'Liberation Sans', sans-serif;letter-spacing:0.000px;letter-spacing:0.3px">01</div>
<div class="t" style="left:937.40px;top:317.30px;font-size:15px;color:#141414;font-weight:normal;font-family:'Liberation Sans', sans-serif;letter-spacing:0.000px;letter-spacing:0.3px">10.36</div>
<div class="t" style="left:1012.10px;top:317.30px;font-size:15px;color:#141414;font-weight:normal;font-family:'Liberation Sans', sans-serif;letter-spacing:0.000px;letter-spacing:0.3px">88</div>
<div class="t" style="left:1087.30px;top:317.30px;font-size:15px;color:#141414;font-weight:normal;font-family:'Liberation Sans', sans-serif;letter-spacing:0.000px;letter-spacing:0.3px">02</div>
<div class="r" style="left:0px;top:337px;width:75px;height:24px;background:#c0c0c0"></div>
<div class="r" style="left:859px;top:337px;width:75px;height:24px;background:#ff9696"></div>
<div class="t" style="left:3.50px;top:341.30px;font-size:15px;color:#141414;font-weight:normal;font-family:'Liberation Sans', sans-serif;letter-spacing:0.000px;letter-spacing:0.3px">19</div>
<div class="t" style="left:78.20px;top:341.30px;font-size:15px;color:#141414;font-weight:normal;font-family:'Liberation Sans', sans-serif;letter-spacing:0.000px;letter-spacing:0.3px">255848014H08139Г</div>
<div class="t" style="left:262.10px;top:341.30px;font-size:15px;color:#141414;font-weight:normal;font-family:'Liberation Sans', sans-serif;letter-spacing:0.000px;letter-spacing:0.3px">05</div>
<div class="t" style="left:337.30px;top:341.30px;font-size:15px;color:#141414;font-weight:normal;font-family:'Liberation Sans', sans-serif;letter-spacing:0.000px;letter-spacing:0.3px">3.0</div>
<div class="t" style="left:412.30px;top:341.30px;font-size:15px;color:#141414;font-weight:normal;font-family:'Liberation Sans', sans-serif;letter-spacing:0.000px;letter-spacing:0.3px">1</div>
<div class="t" style="left:487.30px;top:341.30px;font-size:15px;color:#141414;font-weight:normal;font-family:'Liberation Sans', sans-serif;letter-spacing:0.000px;letter-spacing:0.3px">21</div>
<div class="t" style="left:562.20px;top:341.30px;font-size:15px;color:#141414;font-weight:normal;font-family:'Liberation Sans', sans-serif;letter-spacing:0.000px;letter-spacing:0.3px">448.7</div>
<div class="t" style="left:637.20px;top:341.30px;font-size:15px;color:#141414;font-weight:normal;font-family:'Liberation Sans', sans-serif;letter-spacing:0.000px;letter-spacing:0.3px">2937.27</div>
<div class="t" style="left:712.30px;top:341.30px;font-size:15px;color:#141414;font-weight:normal;font-family:'Liberation Sans', sans-serif;letter-spacing:0.000px;letter-spacing:0.3px">2480.0</div>
<div class="t" style="left:787.30px;top:341.30px;font-size:15px;color:#141414;font-weight:normal;font-family:'Liberation Sans', sans-serif;letter-spacing:0.000px;letter-spacing:0.3px">2488.57</div>
<div class="t" style="left:862.40px;top:341.30px;font-size:15px;color:#141414;font-weight:normal;font-family:'Liberation Sans', sans-serif;letter-spacing:0.000px;letter-spacing:0.3px">01</div>
<div class="t" style="left:937.40px;top:341.30px;font-size:15px;color:#141414;font-weight:normal;font-family:'Liberation Sans', sans-serif;letter-spacing:0.000px;letter-spacing:0.3px">9.19</div>
<div class="t" style="left:1012.10px;top:341.30px;font-size:15px;color:#141414;font-weight:normal;font-family:'Liberation Sans', sans-serif;letter-spacing:0.000px;letter-spacing:0.3px">88</div>
<div class="t" style="left:1087.30px;top:341.30px;font-size:15px;color:#141414;font-weight:normal;font-family:'Liberation Sans', sans-serif;letter-spacing:0.000px;letter-spacing:0.3px">02</div>
<div class="r" style="left:0px;top:361px;width:75px;height:24px;background:#c0c0c0"></div>
<div class="r" style="left:859px;top:361px;width:75px;height:24px;background:#ff9696"></div>
<div class="t" style="left:3.50px;top:365.30px;font-size:15px;color:#141414;font-weight:normal;font-family:'Liberation Sans', sans-serif;letter-spacing:0.000px;letter-spacing:0.3px">20</div>
<div class="t" style="left:78.20px;top:365.30px;font-size:15px;color:#141414;font-weight:normal;font-family:'Liberation Sans', sans-serif;letter-spacing:0.000px;letter-spacing:0.3px">255848014H08139Г</div>
<div class="t" style="left:262.10px;top:365.30px;font-size:15px;color:#141414;font-weight:normal;font-family:'Liberation Sans', sans-serif;letter-spacing:0.000px;letter-spacing:0.3px">05</div>
<div class="t" style="left:337.30px;top:365.30px;font-size:15px;color:#141414;font-weight:normal;font-family:'Liberation Sans', sans-serif;letter-spacing:0.000px;letter-spacing:0.3px">4.0</div>
<div class="t" style="left:412.30px;top:365.30px;font-size:15px;color:#141414;font-weight:normal;font-family:'Liberation Sans', sans-serif;letter-spacing:0.000px;letter-spacing:0.3px">1</div>
<div class="t" style="left:487.30px;top:365.30px;font-size:15px;color:#141414;font-weight:normal;font-family:'Liberation Sans', sans-serif;letter-spacing:0.000px;letter-spacing:0.3px">21</div>
<div class="t" style="left:562.20px;top:365.30px;font-size:15px;color:#141414;font-weight:normal;font-family:'Liberation Sans', sans-serif;letter-spacing:0.000px;letter-spacing:0.3px">7.0</div>
<div class="t" style="left:637.20px;top:365.30px;font-size:15px;color:#141414;font-weight:normal;font-family:'Liberation Sans', sans-serif;letter-spacing:0.000px;letter-spacing:0.3px">448.7</div>
<div class="t" style="left:712.30px;top:365.30px;font-size:15px;color:#141414;font-weight:normal;font-family:'Liberation Sans', sans-serif;letter-spacing:0.000px;letter-spacing:0.3px">420.0</div>
<div class="t" style="left:787.30px;top:365.30px;font-size:15px;color:#141414;font-weight:normal;font-family:'Liberation Sans', sans-serif;letter-spacing:0.000px;letter-spacing:0.3px">441.7</div>
<div class="t" style="left:862.40px;top:365.30px;font-size:15px;color:#141414;font-weight:normal;font-family:'Liberation Sans', sans-serif;letter-spacing:0.000px;letter-spacing:0.3px">01</div>
<div class="t" style="left:937.40px;top:365.30px;font-size:15px;color:#141414;font-weight:normal;font-family:'Liberation Sans', sans-serif;letter-spacing:0.000px;letter-spacing:0.3px">10.36</div>
<div class="t" style="left:1012.10px;top:365.30px;font-size:15px;color:#141414;font-weight:normal;font-family:'Liberation Sans', sans-serif;letter-spacing:0.000px;letter-spacing:0.3px">88</div>
<div class="t" style="left:1087.30px;top:365.30px;font-size:15px;color:#141414;font-weight:normal;font-family:'Liberation Sans', sans-serif;letter-spacing:0.000px;letter-spacing:0.3px">02</div>
<div class="r" style="left:0px;top:385px;width:75px;height:24px;background:#c0c0c0"></div>
<div class="r" style="left:859px;top:385px;width:75px;height:24px;background:#ff9696"></div>
<div class="t" style="left:3.50px;top:389.30px;font-size:15px;color:#141414;font-weight:normal;font-family:'Liberation Sans', sans-serif;letter-spacing:0.000px;letter-spacing:0.3px">21</div>
<div class="t" style="left:78.20px;top:389.30px;font-size:15px;color:#141414;font-weight:normal;font-family:'Liberation Sans', sans-serif;letter-spacing:0.000px;letter-spacing:0.3px">255848014H08139Г</div>
<div class="t" style="left:262.10px;top:389.30px;font-size:15px;color:#141414;font-weight:normal;font-family:'Liberation Sans', sans-serif;letter-spacing:0.000px;letter-spacing:0.3px">05</div>
<div class="t" style="left:337.30px;top:389.30px;font-size:15px;color:#141414;font-weight:normal;font-family:'Liberation Sans', sans-serif;letter-spacing:0.000px;letter-spacing:0.3px">5.0</div>
<div class="t" style="left:412.30px;top:389.30px;font-size:15px;color:#141414;font-weight:normal;font-family:'Liberation Sans', sans-serif;letter-spacing:0.000px;letter-spacing:0.3px">1</div>
<div class="t" style="left:487.30px;top:389.30px;font-size:15px;color:#141414;font-weight:normal;font-family:'Liberation Sans', sans-serif;letter-spacing:0.000px;letter-spacing:0.3px">21</div>
<div class="t" style="left:562.20px;top:389.30px;font-size:15px;color:#141414;font-weight:normal;font-family:'Liberation Sans', sans-serif;letter-spacing:0.000px;letter-spacing:0.3px">0.0</div>
<div class="t" style="left:637.20px;top:389.30px;font-size:15px;color:#141414;font-weight:normal;font-family:'Liberation Sans', sans-serif;letter-spacing:0.000px;letter-spacing:0.3px">7.0</div>
<div class="t" style="left:712.30px;top:389.30px;font-size:15px;color:#141414;font-weight:normal;font-family:'Liberation Sans', sans-serif;letter-spacing:0.000px;letter-spacing:0.3px">7.0</div>
<div class="t" style="left:787.30px;top:389.30px;font-size:15px;color:#141414;font-weight:normal;font-family:'Liberation Sans', sans-serif;letter-spacing:0.000px;letter-spacing:0.3px">7.0</div>
<div class="t" style="left:862.40px;top:389.30px;font-size:15px;color:#141414;font-weight:normal;font-family:'Liberation Sans', sans-serif;letter-spacing:0.000px;letter-spacing:0.3px">01</div>
<div class="t" style="left:937.40px;top:389.30px;font-size:15px;color:#141414;font-weight:normal;font-family:'Liberation Sans', sans-serif;letter-spacing:0.000px;letter-spacing:0.3px">10.36</div>
<div class="t" style="left:1012.10px;top:389.30px;font-size:15px;color:#141414;font-weight:normal;font-family:'Liberation Sans', sans-serif;letter-spacing:0.000px;letter-spacing:0.3px">88</div>
<div class="t" style="left:1087.30px;top:389.30px;font-size:15px;color:#141414;font-weight:normal;font-family:'Liberation Sans', sans-serif;letter-spacing:0.000px;letter-spacing:0.3px">02</div>
<div class="r" style="left:0px;top:409px;width:75px;height:24px;background:#c0c0c0"></div>
<div class="r" style="left:859px;top:409px;width:75px;height:24px;background:#ff9696"></div>
<div class="t" style="left:3.50px;top:413.30px;font-size:15px;color:#141414;font-weight:normal;font-family:'Liberation Sans', sans-serif;letter-spacing:0.000px;letter-spacing:0.3px">22</div>
<div class="t" style="left:78.20px;top:413.30px;font-size:15px;color:#141414;font-weight:normal;font-family:'Liberation Sans', sans-serif;letter-spacing:0.000px;letter-spacing:0.3px">255848014H08139Г</div>
<div class="t" style="left:262.10px;top:413.30px;font-size:15px;color:#141414;font-weight:normal;font-family:'Liberation Sans', sans-serif;letter-spacing:0.000px;letter-spacing:0.3px">06</div>
<div class="t" style="left:337.30px;top:413.30px;font-size:15px;color:#141414;font-weight:normal;font-family:'Liberation Sans', sans-serif;letter-spacing:0.000px;letter-spacing:0.3px">1.0</div>
<div class="t" style="left:412.30px;top:413.30px;font-size:15px;color:#141414;font-weight:normal;font-family:'Liberation Sans', sans-serif;letter-spacing:0.000px;letter-spacing:0.3px">1</div>
<div class="t" style="left:487.30px;top:413.30px;font-size:15px;color:#141414;font-weight:normal;font-family:'Liberation Sans', sans-serif;letter-spacing:0.000px;letter-spacing:0.3px">02</div>
<div class="t" style="left:562.20px;top:413.30px;font-size:15px;color:#141414;font-weight:normal;font-family:'Liberation Sans', sans-serif;letter-spacing:0.000px;letter-spacing:0.3px">3115.83</div>
<div class="t" style="left:637.20px;top:413.30px;font-size:15px;color:#141414;font-weight:normal;font-family:'Liberation Sans', sans-serif;letter-spacing:0.000px;letter-spacing:0.3px">3670.0</div>
<div class="t" style="left:712.30px;top:413.30px;font-size:15px;color:#141414;font-weight:normal;font-family:'Liberation Sans', sans-serif;letter-spacing:0.000px;letter-spacing:0.3px">554.17</div>
<div class="t" style="left:787.30px;top:413.30px;font-size:15px;color:#141414;font-weight:normal;font-family:'Liberation Sans', sans-serif;letter-spacing:0.000px;letter-spacing:0.3px">554.17</div>
<div class="t" style="left:862.40px;top:413.30px;font-size:15px;color:#141414;font-weight:normal;font-family:'Liberation Sans', sans-serif;letter-spacing:0.000px;letter-spacing:0.3px">01</div>
<div class="t" style="left:937.40px;top:413.30px;font-size:15px;color:#141414;font-weight:normal;font-family:'Liberation Sans', sans-serif;letter-spacing:0.000px;letter-spacing:0.3px">7.4</div>
<div class="t" style="left:1012.10px;top:413.30px;font-size:15px;color:#141414;font-weight:normal;font-family:'Liberation Sans', sans-serif;letter-spacing:0.000px;letter-spacing:0.3px">80</div>
<div class="t" style="left:1087.30px;top:413.30px;font-size:15px;color:#141414;font-weight:normal;font-family:'Liberation Sans', sans-serif;letter-spacing:0.000px;letter-spacing:0.3px">02</div>
<div class="r" style="left:0px;top:433px;width:75px;height:24px;background:#c0c0c0"></div>
<div class="r" style="left:859px;top:433px;width:75px;height:24px;background:#ff9696"></div>
<div class="t" style="left:3.50px;top:437.30px;font-size:15px;color:#141414;font-weight:normal;font-family:'Liberation Sans', sans-serif;letter-spacing:0.000px;letter-spacing:0.3px">23</div>
<div class="t" style="left:78.20px;top:437.30px;font-size:15px;color:#141414;font-weight:normal;font-family:'Liberation Sans', sans-serif;letter-spacing:0.000px;letter-spacing:0.3px">255848014H10005Г</div>
<div class="t" style="left:262.10px;top:437.30px;font-size:15px;color:#141414;font-weight:normal;font-family:'Liberation Sans', sans-serif;letter-spacing:0.000px;letter-spacing:0.3px">03</div>
<div class="t" style="left:337.30px;top:437.30px;font-size:15px;color:#141414;font-weight:normal;font-family:'Liberation Sans', sans-serif;letter-spacing:0.000px;letter-spacing:0.3px">1.0</div>
<div class="t" style="left:412.30px;top:437.30px;font-size:15px;color:#141414;font-weight:normal;font-family:'Liberation Sans', sans-serif;letter-spacing:0.000px;letter-spacing:0.3px">1</div>
<div class="t" style="left:487.30px;top:437.30px;font-size:15px;color:#141414;font-weight:normal;font-family:'Liberation Sans', sans-serif;letter-spacing:0.000px;letter-spacing:0.3px">06</div>
<div class="t" style="left:562.20px;top:437.30px;font-size:15px;color:#141414;font-weight:normal;font-family:'Liberation Sans', sans-serif;letter-spacing:0.000px;letter-spacing:0.3px">7.0</div>
<div class="t" style="left:637.20px;top:437.30px;font-size:15px;color:#141414;font-weight:normal;font-family:'Liberation Sans', sans-serif;letter-spacing:0.000px;letter-spacing:0.3px">1674.32</div>
<div class="t" style="left:712.30px;top:437.30px;font-size:15px;color:#141414;font-weight:normal;font-family:'Liberation Sans', sans-serif;letter-spacing:0.000px;letter-spacing:0.3px">1670.0</div>
<div class="t" style="left:787.30px;top:437.30px;font-size:15px;color:#141414;font-weight:normal;font-family:'Liberation Sans', sans-serif;letter-spacing:0.000px;letter-spacing:0.3px">1667.32</div>
<div class="t" style="left:862.40px;top:437.30px;font-size:15px;color:#141414;font-weight:normal;font-family:'Liberation Sans', sans-serif;letter-spacing:0.000px;letter-spacing:0.3px">01</div>
<div class="t" style="left:937.40px;top:437.30px;font-size:15px;color:#141414;font-weight:normal;font-family:'Liberation Sans', sans-serif;letter-spacing:0.000px;letter-spacing:0.3px">8.94</div>
<div class="t" style="left:1012.10px;top:437.30px;font-size:15px;color:#141414;font-weight:normal;font-family:'Liberation Sans', sans-serif;letter-spacing:0.000px;letter-spacing:0.3px">88</div>
<div class="t" style="left:1087.30px;top:437.30px;font-size:15px;color:#141414;font-weight:normal;font-family:'Liberation Sans', sans-serif;letter-spacing:0.000px;letter-spacing:0.3px">02</div>
</div>
<div class="r" style="left:1132px;top:238px;width:10px;height:444px;background:#f5f5f5"></div>
<div class="r" style="left:1134px;top:317px;width:6px;height:263px;background:#d3d3d3;border-radius:3px"></div>
<div class="r" style="left:7px;top:682px;width:1125px;height:10px;background:#f5f5f5"></div>
<div class="r" style="left:10px;top:684px;width:908px;height:6px;background:#d6d6d6;border-radius:3px"></div>
<svg class="r" style="left:11px;top:693px;" width="12" height="9" viewBox="0 0 12 9"><path d="M1.5 6.5 L6 2 L10.5 6.5" fill="none" stroke="#555" stroke-width="1.1"/></svg>
<svg class="r" style="left:27px;top:693px;" width="12" height="9" viewBox="0 0 12 9"><path d="M1.5 2.5 L6 7 L10.5 2.5" fill="none" stroke="#555" stroke-width="1.1"/></svg>
<div class="r" style="left:6px;top:703px;width:1137px;height:176px;background:#fff;border:1px solid #c4c4c4;box-sizing:border-box"></div>
<div class="r" style="left:7px;top:728px;width:1125px;height:1px;background:#dedede"></div>
<div class="r" style="left:26px;top:704px;width:1px;height:24px;background:#e2e2e2"></div>
<div class="r" style="left:194px;top:704px;width:1px;height:24px;background:#e2e2e2"></div>
<div class="r" style="left:997px;top:704px;width:1px;height:24px;background:#e2e2e2"></div>
<div class="r" style="left:1111px;top:704px;width:1px;height:24px;background:#e2e2e2"></div>
<div class="t" style="left:94.40px;top:709.15px;font-size:14px;color:#1a1a1a;font-weight:normal;font-family:'Liberation Sans', sans-serif;letter-spacing:0.742px;">Data</div>
<div class="t" style="left:579.94px;top:709.15px;font-size:14px;color:#1a1a1a;font-weight:normal;font-family:'Liberation Sans', sans-serif;letter-spacing:0.000px;">Error</div>
<div class="t" style="left:1027.05px;top:709.15px;font-size:14px;color:#1a1a1a;font-weight:normal;font-family:'Liberation Sans', sans-serif;letter-spacing:0.642px;">Position</div>
<div class="r" style="left:1132px;top:704px;width:10px;height:174px;background:#f5f5f5"></div>
<div class="r" style="left:1134px;top:706px;width:6px;height:20px;background:#d8d8d8;border-radius:3px"></div>
<svg class="r" style="left:9px;top:733px;" width="16" height="16" viewBox="0 0 16 16"><circle cx="8" cy="8" r="7.2" fill="#2f2f2f"/><rect x="3.6" y="6.6" width="8.8" height="2.8" fill="#fff"/></svg>
<div class="t" style="left:30.30px;top:733.30px;font-size:15px;color:#141414;font-weight:normal;font-family:'Liberation Sans', sans-serif;letter-spacing:-0.075px;">Ukk_k.db</div>
<div class="t" style="left:197.00px;top:733.30px;font-size:15px;color:#141414;font-weight:normal;font-family:'Liberation Sans', sans-serif;letter-spacing:0.137px;">Integer part size of the TWIST_MOMENT field does't match to the specification - 3</div>
<div class="t" style="left:1078.91px;top:733.30px;font-size:15px;color:#141414;font-weight:normal;font-family:'Liberation Sans', sans-serif;letter-spacing:0.000px;">4:16</div>
<svg class="r" style="left:9px;top:757px;" width="16" height="16" viewBox="0 0 16 16"><circle cx="8" cy="8" r="7.2" fill="#2f2f2f"/><rect x="3.6" y="6.6" width="8.8" height="2.8" fill="#fff"/></svg>
<div class="t" style="left:30.30px;top:757.30px;font-size:15px;color:#141414;font-weight:normal;font-family:'Liberation Sans', sans-serif;letter-spacing:-0.075px;">Ukk_k.db</div>
<div class="t" style="left:197.00px;top:757.30px;font-size:15px;color:#141414;font-weight:normal;font-family:'Liberation Sans', sans-serif;letter-spacing:0.137px;">Integer part size of the TWIST_MOMENT field does't match to the specification - 3</div>
<div class="t" style="left:1078.91px;top:757.30px;font-size:15px;color:#141414;font-weight:normal;font-family:'Liberation Sans', sans-serif;letter-spacing:0.000px;">5:16</div>
<svg class="r" style="left:9px;top:781px;" width="16" height="16" viewBox="0 0 16 16"><circle cx="8" cy="8" r="7.2" fill="#2f2f2f"/><rect x="3.6" y="6.6" width="8.8" height="2.8" fill="#fff"/></svg>
<div class="t" style="left:30.30px;top:781.30px;font-size:15px;color:#141414;font-weight:normal;font-family:'Liberation Sans', sans-serif;letter-spacing:-0.075px;">Ukk_k.db</div>
<div class="t" style="left:197.00px;top:781.30px;font-size:15px;color:#141414;font-weight:normal;font-family:'Liberation Sans', sans-serif;letter-spacing:0.137px;">Integer part size of the TWIST_MOMENT field does't match to the specification - 3</div>
<div class="t" style="left:1078.91px;top:781.30px;font-size:15px;color:#141414;font-weight:normal;font-family:'Liberation Sans', sans-serif;letter-spacing:0.000px;">6:16</div>
<svg class="r" style="left:9px;top:805px;" width="16" height="16" viewBox="0 0 16 16"><circle cx="8" cy="8" r="7.2" fill="#2f2f2f"/><rect x="3.6" y="6.6" width="8.8" height="2.8" fill="#fff"/></svg>
<div class="t" style="left:30.30px;top:805.30px;font-size:15px;color:#141414;font-weight:normal;font-family:'Liberation Sans', sans-serif;letter-spacing:-0.075px;">Ukk_k.db</div>
<div class="t" style="left:197.00px;top:805.30px;font-size:15px;color:#141414;font-weight:normal;font-family:'Liberation Sans', sans-serif;letter-spacing:0.137px;">Integer part size of the TWIST_MOMENT field does't match to the specification - 3</div>
<div class="t" style="left:1070.56px;top:805.30px;font-size:15px;color:#141414;font-weight:normal;font-family:'Liberation Sans', sans-serif;letter-spacing:0.000px;">10:16</div>
<svg class="r" style="left:9px;top:829px;" width="16" height="16" viewBox="0 0 16 16"><circle cx="8" cy="8" r="7.2" fill="#2f2f2f"/><rect x="3.6" y="6.6" width="8.8" height="2.8" fill="#fff"/></svg>
<div class="t" style="left:30.30px;top:829.30px;font-size:15px;color:#141414;font-weight:normal;font-family:'Liberation Sans', sans-serif;letter-spacing:-0.075px;">Ukk_k.db</div>
<div class="t" style="left:197.00px;top:829.30px;font-size:15px;color:#141414;font-weight:normal;font-family:'Liberation Sans', sans-serif;letter-spacing:0.137px;">Integer part size of the TWIST_MOMENT field does't match to the specification - 3</div>
<div class="t" style="left:1071.68px;top:829.30px;font-size:15px;color:#141414;font-weight:normal;font-family:'Liberation Sans', sans-serif;letter-spacing:0.000px;">11:16</div>
<div class="r" style="left:7px;top:849px;width:1125px;height:24px;background:#d2d2d2"></div>
<svg class="r" style="left:9px;top:853px;" width="16" height="16" viewBox="0 0 16 16"><circle cx="8" cy="8" r="7.2" fill="#2f2f2f"/><rect x="3.6" y="6.6" width="8.8" height="2.8" fill="#fff"/></svg>
<div class="t" style="left:30.30px;top:853.30px;font-size:15px;color:#141414;font-weight:normal;font-family:'Liberation Sans', sans-serif;letter-spacing:-0.075px;">Ukk_k.db</div>
<div class="t" style="left:197.00px;top:853.30px;font-size:15px;color:#141414;font-weight:normal;font-family:'Liberation Sans', sans-serif;letter-spacing:0.137px;">Integer part size of the TWIST_MOMENT field does't match to the specification - 3</div>
<div class="t" style="left:1070.56px;top:853.30px;font-size:15px;color:#141414;font-weight:normal;font-family:'Liberation Sans', sans-serif;letter-spacing:0.000px;">12:16</div>
<div class="r" style="left:1148px;top:101px;width:235px;height:789px;background:#f2f2f2;border:1px solid #bdbdbd;box-sizing:border-box"></div>
<div class="r" style="left:1149px;top:102px;width:233px;height:27px;background:#d4d4d4"></div>
<div class="r" style="left:1148px;top:101px;width:101px;height:28px;background:#f2f2f2;border:1px solid #bdbdbd;border-bottom:none;box-sizing:border-box"></div>
<div class="t" style="left:1154.30px;top:108.78px;font-size:11.6px;color:#1a1a1a;font-weight:normal;font-family:'Liberation Sans', sans-serif;letter-spacing:0.483px;">Loading data</div>
<svg class="r" style="left:1232.5px;top:111px;" width="9" height="9" viewBox="0 0 9 9"><path d="M0.8 0.8 L8.2 8.2 M8.2 0.8 L0.8 8.2" stroke="#666" stroke-width="1.15"/></svg>
<div class="r" style="left:1365px;top:118px;width:10px;height:1px;background:#444"></div>
<div class="r" style="left:1151px;top:131px;width:228px;height:687px;background:#fff;border:1px solid #b4b4b4;box-sizing:border-box"></div>
<div class="r" style="left:1368px;top:132px;width:10px;height:685px;background:#f5f5f5"></div>
<div class="r" style="left:1370px;top:134px;width:6px;height:74px;background:#d8d8d8;border-radius:3px"></div>
<svg class="r" style="left:1156px;top:136px;" width="14" height="11" viewBox="0 0 14 11"><path d="M0 0 H4.8 L6.8 2.3 H13.9 V10.9 H0 Z" fill="#98a5ae"/></svg>
<div class="t" style="left:1175.30px;top:134.85px;font-size:14px;color:#141414;font-weight:normal;font-family:'Liberation Sans', sans-serif;letter-spacing:0.114px;">base140126</div>
<svg class="r" style="left:1155px;top:158px;" width="11" height="8" viewBox="0 0 11 8"><path d="M1.2 1.5 L5.5 5.8 L9.8 1.5" fill="none" stroke="#ababab" stroke-width="1.8"/></svg>
<svg class="r" style="left:1174px;top:155px;" width="14" height="11" viewBox="0 0 14 11"><path d="M0 0 H4.8 L6.8 2.3 H13.9 V10.9 H0 Z" fill="#98a5ae"/></svg>
<div class="t" style="left:1193.50px;top:154.05px;font-size:14px;color:#141414;font-weight:normal;font-family:'Liberation Sans', sans-serif;letter-spacing:-0.618px;">BASA</div>
<div class="r" style="left:1152px;top:132px;width:216px;height:685px;overflow:hidden">
<svg class="r" style="left:42px;top:41.0px;" width="10" height="14" viewBox="0 0 10 14"><path d="M0 5.2 H5 V0 H9.9 V13.8 H0 Z" fill="#98a5ae"/><path d="M0.1 3.7 L3.7 0.1 V3.7 Z" fill="#98a5ae"/></svg>
<div class="t" style="left:59.00px;top:40.65px;font-size:14px;color:#141414;font-weight:normal;font-family:'Liberation Sans', sans-serif;letter-spacing:0.000px;">A_chgp.PX</div>
<svg class="r" style="left:42px;top:60.0px;" width="10" height="14" viewBox="0 0 10 14"><path d="M0 5.2 H5 V0 H9.9 V13.8 H0 Z" fill="#98a5ae"/><path d="M0.1 3.7 L3.7 0.1 V3.7 Z" fill="#98a5ae"/></svg>
<div class="t" style="left:59.00px;top:59.65px;font-size:14px;color:#141414;font-weight:normal;font-family:'Liberation Sans', sans-serif;letter-spacing:0.000px;">A_chgp.VAL</div>
<svg class="r" style="left:42px;top:79.0px;" width="10" height="14" viewBox="0 0 10 14"><path d="M0 5.2 H5 V0 H9.9 V13.8 H0 Z" fill="#98a5ae"/><path d="M0.1 3.7 L3.7 0.1 V3.7 Z" fill="#98a5ae"/></svg>
<div class="t" style="left:59.00px;top:78.65px;font-size:14px;color:#141414;font-weight:normal;font-family:'Liberation Sans', sans-serif;letter-spacing:0.000px;">A_chgp.db</div>
<svg class="r" style="left:42px;top:98.0px;" width="10" height="14" viewBox="0 0 10 14"><path d="M0 5.2 H5 V0 H9.9 V13.8 H0 Z" fill="#98a5ae"/><path d="M0.1 3.7 L3.7 0.1 V3.7 Z" fill="#98a5ae"/></svg>
<div class="t" style="left:59.00px;top:97.65px;font-size:14px;color:#141414;font-weight:normal;font-family:'Liberation Sans', sans-serif;letter-spacing:0.000px;">A_chgp1.PX</div>
<svg class="r" style="left:42px;top:117.0px;" width="10" height="14" viewBox="0 0 10 14"><path d="M0 5.2 H5 V0 H9.9 V13.8 H0 Z" fill="#98a5ae"/><path d="M0.1 3.7 L3.7 0.1 V3.7 Z" fill="#98a5ae"/></svg>
<div class="t" style="left:59.00px;top:116.65px;font-size:14px;color:#141414;font-weight:normal;font-family:'Liberation Sans', sans-serif;letter-spacing:0.000px;">A_chgp1.XG0</div>
<svg class="r" style="left:42px;top:136.0px;" width="10" height="14" viewBox="0 0 10 14"><path d="M0 5.2 H5 V0 H9.9 V13.8 H0 Z" fill="#98a5ae"/><path d="M0.1 3.7 L3.7 0.1 V3.7 Z" fill="#98a5ae"/></svg>
<div class="t" style="left:59.00px;top:135.65px;font-size:14px;color:#141414;font-weight:normal;font-family:'Liberation Sans', sans-serif;letter-spacing:0.000px;">A_chgp1.YG0</div>
<svg class="r" style="left:42px;top:155.0px;" width="10" height="14" viewBox="0 0 10 14"><path d="M0 5.2 H5 V0 H9.9 V13.8 H0 Z" fill="#98a5ae"/><path d="M0.1 3.7 L3.7 0.1 V3.7 Z" fill="#98a5ae"/></svg>
<div class="t" style="left:59.00px;top:154.65px;font-size:14px;color:#141414;font-weight:normal;font-family:'Liberation Sans', sans-serif;letter-spacing:0.000px;">A_chgp1.db</div>
<svg class="r" style="left:42px;top:174.0px;" width="10" height="14" viewBox="0 0 10 14"><path d="M0 5.2 H5 V0 H9.9 V13.8 H0 Z" fill="#98a5ae"/><path d="M0.1 3.7 L3.7 0.1 V3.7 Z" fill="#98a5ae"/></svg>
<div class="t" style="left:59.00px;top:173.65px;font-size:14px;color:#141414;font-weight:normal;font-family:'Liberation Sans', sans-serif;letter-spacing:0.000px;">A_fnek.PX</div>
<svg class="r" style="left:42px;top:193.0px;" width="10" height="14" viewBox="0 0 10 14"><path d="M0 5.2 H5 V0 H9.9 V13.8 H0 Z" fill="#98a5ae"/><path d="M0.1 3.7 L3.7 0.1 V3.7 Z" fill="#98a5ae"/></svg>
<div class="t" style="left:59.00px;top:192.65px;font-size:14px;color:#141414;font-weight:normal;font-family:'Liberation Sans', sans-serif;letter-spacing:0.000px;">A_fnek.VAL</div>
<svg class="r" style="left:42px;top:212.0px;" width="10" height="14" viewBox="0 0 10 14"><path d="M0 5.2 H5 V0 H9.9 V13.8 H0 Z" fill="#98a5ae"/><path d="M0.1 3.7 L3.7 0.1 V3.7 Z" fill="#98a5ae"/></svg>
<div class="t" style="left:59.00px;top:211.65px;font-size:14px;color:#141414;font-weight:normal;font-family:'Liberation Sans', sans-serif;letter-spacing:0.000px;">A_fnek.db</div>
<svg class="r" style="left:42px;top:231.0px;" width="10" height="14" viewBox="0 0 10 14"><path d="M0 5.2 H5 V0 H9.9 V13.8 H0 Z" fill="#98a5ae"/><path d="M0.1 3.7 L3.7 0.1 V3.7 Z" fill="#98a5ae"/></svg>
<div class="t" style="left:59.00px;top:230.65px;font-size:14px;color:#141414;font-weight:normal;font-family:'Liberation Sans', sans-serif;letter-spacing:0.000px;">A_gsek.FAM</div>
<svg class="r" style="left:42px;top:250.0px;" width="10" height="14" viewBox="0 0 10 14"><path d="M0 5.2 H5 V0 H9.9 V13.8 H0 Z" fill="#98a5ae"/><path d="M0.1 3.7 L3.7 0.1 V3.7 Z" fill="#98a5ae"/></svg>
<div class="t" style="left:59.00px;top:249.65px;font-size:14px;color:#141414;font-weight:normal;font-family:'Liberation Sans', sans-serif;letter-spacing:0.000px;">A_gsek.PX</div>
<svg class="r" style="left:42px;top:269.0px;" width="10" height="14" viewBox="0 0 10 14"><path d="M0 5.2 H5 V0 H9.9 V13.8 H0 Z" fill="#98a5ae"/><path d="M0.1 3.7 L3.7 0.1 V3.7 Z" fill="#98a5ae"/></svg>
<div class="t" style="left:59.00px;top:268.65px;font-size:14px;color:#141414;font-weight:normal;font-family:'Liberation Sans', sans-serif;letter-spacing:0.000px;">A_gsek.TV</div>
<svg class="r" style="left:42px;top:288.0px;" width="10" height="14" viewBox="0 0 10 14"><path d="M0 5.2 H5 V0 H9.9 V13.8 H0 Z" fill="#98a5ae"/><path d="M0.1 3.7 L3.7 0.1 V3.7 Z" fill="#98a5ae"/></svg>
<div class="t" style="left:59.00px;top:287.65px;font-size:14px;color:#141414;font-weight:normal;font-family:'Liberation Sans', sans-serif;letter-spacing:0.000px;">A_gsek.VAL</div>
<svg class="r" style="left:42px;top:307.0px;" width="10" height="14" viewBox="0 0 10 14"><path d="M0 5.2 H5 V0 H9.9 V13.8 H0 Z" fill="#98a5ae"/><path d="M0.1 3.7 L3.7 0.1 V3.7 Z" fill="#98a5ae"/></svg>
<div class="t" style="left:59.00px;top:306.65px;font-size:14px;color:#141414;font-weight:normal;font-family:'Liberation Sans', sans-serif;letter-spacing:0.000px;">A_gsek.db</div>
<svg class="r" style="left:42px;top:326.0px;" width="10" height="14" viewBox="0 0 10 14"><path d="M0 5.2 H5 V0 H9.9 V13.8 H0 Z" fill="#98a5ae"/><path d="M0.1 3.7 L3.7 0.1 V3.7 Z" fill="#98a5ae"/></svg>
<div class="t" style="left:59.00px;top:325.65px;font-size:14px;color:#141414;font-weight:normal;font-family:'Liberation Sans', sans-serif;letter-spacing:0.000px;">A_gvpg.PX</div>
<svg class="r" style="left:42px;top:345.0px;" width="10" height="14" viewBox="0 0 10 14"><path d="M0 5.2 H5 V0 H9.9 V13.8 H0 Z" fill="#98a5ae"/><path d="M0.1 3.7 L3.7 0.1 V3.7 Z" fill="#98a5ae"/></svg>
<div class="t" style="left:59.00px;top:344.65px;font-size:14px;color:#141414;font-weight:normal;font-family:'Liberation Sans', sans-serif;letter-spacing:0.000px;">A_gvpg.VAL</div>
<svg class="r" style="left:42px;top:364.0px;" width="10" height="14" viewBox="0 0 10 14"><path d="M0 5.2 H5 V0 H9.9 V13.8 H0 Z" fill="#98a5ae"/><path d="M0.1 3.7 L3.7 0.1 V3.7 Z" fill="#98a5ae"/></svg>
<div class="t" style="left:59.00px;top:363.65px;font-size:14px;color:#141414;font-weight:normal;font-family:'Liberation Sans', sans-serif;letter-spacing:0.000px;">A_gvpg.db</div>
<svg class="r" style="left:42px;top:383.0px;" width="10" height="14" viewBox="0 0 10 14"><path d="M0 5.2 H5 V0 H9.9 V13.8 H0 Z" fill="#98a5ae"/><path d="M0.1 3.7 L3.7 0.1 V3.7 Z" fill="#98a5ae"/></svg>
<div class="t" style="left:59.00px;top:382.65px;font-size:14px;color:#141414;font-weight:normal;font-family:'Liberation Sans', sans-serif;letter-spacing:0.000px;">A_igk.PX</div>
<svg class="r" style="left:42px;top:402.0px;" width="10" height="14" viewBox="0 0 10 14"><path d="M0 5.2 H5 V0 H9.9 V13.8 H0 Z" fill="#98a5ae"/><path d="M0.1 3.7 L3.7 0.1 V3.7 Z" fill="#98a5ae"/></svg>
<div class="t" style="left:59.00px;top:401.65px;font-size:14px;color:#141414;font-weight:normal;font-family:'Liberation Sans', sans-serif;letter-spacing:0.000px;">A_igk.VAL</div>
<svg class="r" style="left:42px;top:421.0px;" width="10" height="14" viewBox="0 0 10 14"><path d="M0 5.2 H5 V0 H9.9 V13.8 H0 Z" fill="#98a5ae"/><path d="M0.1 3.7 L3.7 0.1 V3.7 Z" fill="#98a5ae"/></svg>
<div class="t" style="left:59.00px;top:420.65px;font-size:14px;color:#141414;font-weight:normal;font-family:'Liberation Sans', sans-serif;letter-spacing:0.000px;">A_igk.db</div>
<svg class="r" style="left:42px;top:440.0px;" width="10" height="14" viewBox="0 0 10 14"><path d="M0 5.2 H5 V0 H9.9 V13.8 H0 Z" fill="#98a5ae"/><path d="M0.1 3.7 L3.7 0.1 V3.7 Z" fill="#98a5ae"/></svg>
<div class="t" style="left:59.00px;top:439.65px;font-size:14px;color:#141414;font-weight:normal;font-family:'Liberation Sans', sans-serif;letter-spacing:0.000px;">A_igkfa.PX</div>
<svg class="r" style="left:42px;top:459.0px;" width="10" height="14" viewBox="0 0 10 14"><path d="M0 5.2 H5 V0 H9.9 V13.8 H0 Z" fill="#98a5ae"/><path d="M0.1 3.7 L3.7 0.1 V3.7 Z" fill="#98a5ae"/></svg>
<div class="t" style="left:59.00px;top:458.65px;font-size:14px;color:#141414;font-weight:normal;font-family:'Liberation Sans', sans-serif;letter-spacing:0.000px;">A_igkfa.VAL</div>
<svg class="r" style="left:42px;top:478.0px;" width="10" height="14" viewBox="0 0 10 14"><path d="M0 5.2 H5 V0 H9.9 V13.8 H0 Z" fill="#98a5ae"/><path d="M0.1 3.7 L3.7 0.1 V3.7 Z" fill="#98a5ae"/></svg>
<div class="t" style="left:59.00px;top:477.65px;font-size:14px;color:#141414;font-weight:normal;font-family:'Liberation Sans', sans-serif;letter-spacing:0.000px;">A_igkfa.db</div>
<svg class="r" style="left:42px;top:497.0px;" width="10" height="14" viewBox="0 0 10 14"><path d="M0 5.2 H5 V0 H9.9 V13.8 H0 Z" fill="#98a5ae"/><path d="M0.1 3.7 L3.7 0.1 V3.7 Z" fill="#98a5ae"/></svg>
<div class="t" style="left:59.00px;top:496.65px;font-size:14px;color:#141414;font-weight:normal;font-family:'Liberation Sans', sans-serif;letter-spacing:0.000px;">A_igkoi.PX</div>
<svg class="r" style="left:42px;top:516.0px;" width="10" height="14" viewBox="0 0 10 14"><path d="M0 5.2 H5 V0 H9.9 V13.8 H0 Z" fill="#98a5ae"/><path d="M0.1 3.7 L3.7 0.1 V3.7 Z" fill="#98a5ae"/></svg>
<div class="t" style="left:59.00px;top:515.65px;font-size:14px;color:#141414;font-weight:normal;font-family:'Liberation Sans', sans-serif;letter-spacing:0.000px;">A_igkoi.VAL</div>
<svg class="r" style="left:42px;top:535.0px;" width="10" height="14" viewBox="0 0 10 14"><path d="M0 5.2 H5 V0 H9.9 V13.8 H0 Z" fill="#98a5ae"/><path d="M0.1 3.7 L3.7 0.1 V3.7 Z" fill="#98a5ae"/></svg>
<div class="t" style="left:59.00px;top:534.65px;font-size:14px;color:#141414;font-weight:normal;font-family:'Liberation Sans', sans-serif;letter-spacing:0.000px;">A_igkoi.db</div>
<svg class="r" style="left:42px;top:554.0px;" width="10" height="14" viewBox="0 0 10 14"><path d="M0 5.2 H5 V0 H9.9 V13.8 H0 Z" fill="#98a5ae"/><path d="M0.1 3.7 L3.7 0.1 V3.7 Z" fill="#98a5ae"/></svg>
<div class="t" style="left:59.00px;top:553.65px;font-size:14px;color:#141414;font-weight:normal;font-family:'Liberation Sans', sans-serif;letter-spacing:0.000px;">A_nb.PX</div>
<svg class="r" style="left:42px;top:573.0px;" width="10" height="14" viewBox="0 0 10 14"><path d="M0 5.2 H5 V0 H9.9 V13.8 H0 Z" fill="#98a5ae"/><path d="M0.1 3.7 L3.7 0.1 V3.7 Z" fill="#98a5ae"/></svg>
<div class="t" style="left:59.00px;top:572.65px;font-size:14px;color:#141414;font-weight:normal;font-family:'Liberation Sans', sans-serif;letter-spacing:0.000px;">A_nb.VAL</div>
<svg class="r" style="left:42px;top:592.0px;" width="10" height="14" viewBox="0 0 10 14"><path d="M0 5.2 H5 V0 H9.9 V13.8 H0 Z" fill="#98a5ae"/><path d="M0.1 3.7 L3.7 0.1 V3.7 Z" fill="#98a5ae"/></svg>
<div class="t" style="left:59.00px;top:591.65px;font-size:14px;color:#141414;font-weight:normal;font-family:'Liberation Sans', sans-serif;letter-spacing:0.000px;">A_nb.db</div>
<svg class="r" style="left:42px;top:611.0px;" width="10" height="14" viewBox="0 0 10 14"><path d="M0 5.2 H5 V0 H9.9 V13.8 H0 Z" fill="#98a5ae"/><path d="M0.1 3.7 L3.7 0.1 V3.7 Z" fill="#98a5ae"/></svg>
<div class="t" style="left:59.00px;top:610.65px;font-size:14px;color:#141414;font-weight:normal;font-family:'Liberation Sans', sans-serif;letter-spacing:0.000px;">A_ob.PX</div>
<svg class="r" style="left:42px;top:630.0px;" width="10" height="14" viewBox="0 0 10 14"><path d="M0 5.2 H5 V0 H9.9 V13.8 H0 Z" fill="#98a5ae"/><path d="M0.1 3.7 L3.7 0.1 V3.7 Z" fill="#98a5ae"/></svg>
<div class="t" style="left:59.00px;top:629.65px;font-size:14px;color:#141414;font-weight:normal;font-family:'Liberation Sans', sans-serif;letter-spacing:0.000px;">A_ob.VAL</div>
<svg class="r" style="left:42px;top:649.0px;" width="10" height="14" viewBox="0 0 10 14"><path d="M0 5.2 H5 V0 H9.9 V13.8 H0 Z" fill="#98a5ae"/><path d="M0.1 3.7 L3.7 0.1 V3.7 Z" fill="#98a5ae"/></svg>
<div class="t" style="left:59.00px;top:648.65px;font-size:14px;color:#141414;font-weight:normal;font-family:'Liberation Sans', sans-serif;letter-spacing:0.000px;">A_ob.db</div>
<svg class="r" style="left:42px;top:668.0px;" width="10" height="14" viewBox="0 0 10 14"><path d="M0 5.2 H5 V0 H9.9 V13.8 H0 Z" fill="#98a5ae"/><path d="M0.1 3.7 L3.7 0.1 V3.7 Z" fill="#98a5ae"/></svg>
<div class="t" style="left:59.00px;top:667.65px;font-size:14px;color:#141414;font-weight:normal;font-family:'Liberation Sans', sans-serif;letter-spacing:0.000px;">A_omp.PX</div>
</div>
<div class="t" style="left:1151.80px;top:829.78px;font-size:11.6px;color:#141414;font-weight:normal;font-family:'Liberation Sans', sans-serif;letter-spacing:0.499px;">314 files</div>
<svg class="r" style="left:1203px;top:823px;" width="24" height="24" viewBox="0 0 24 24"><circle cx="12" cy="12" r="9.5" fill="none" stroke="#333" stroke-width="3"/><rect x="10.1" y="9.2" width="3.9" height="9.5" fill="#333"/><rect x="10.1" y="5.3" width="3.9" height="2.4" rx="0.8" fill="#333"/></svg>
<div class="t" style="left:1156.60px;top:863.77px;font-size:11.5px;color:#1a1a1a;font-weight:normal;font-family:'Liberation Sans', sans-serif;letter-spacing:0.432px;">Search</div>
<div class="r" style="left:1206px;top:859px;width:169px;height:20px;background:#fff;border:1px solid #c4c4c4;box-sizing:border-box"></div>
<svg class="r" style="left:1340.7px;top:897px;" width="25" height="25" viewBox="0 0 25 25"><path d="M1.3 11.6 Q2.5 8.6 5.6 9.4 L7.6 14 L19.7 1.4 Q21.8 0.4 23.2 4.2 L9.6 21.2 Q7.3 23.8 5.6 21.8 Z" fill="#333" stroke="#333" stroke-width="0.6" stroke-linejoin="round"/></svg>
<div class="t" style="left:1373.00px;top:902.84px;font-size:12px;color:#141414;font-weight:normal;font-family:'Liberation Sans', sans-serif;letter-spacing:0.000px;">2</div>
</body></html>
